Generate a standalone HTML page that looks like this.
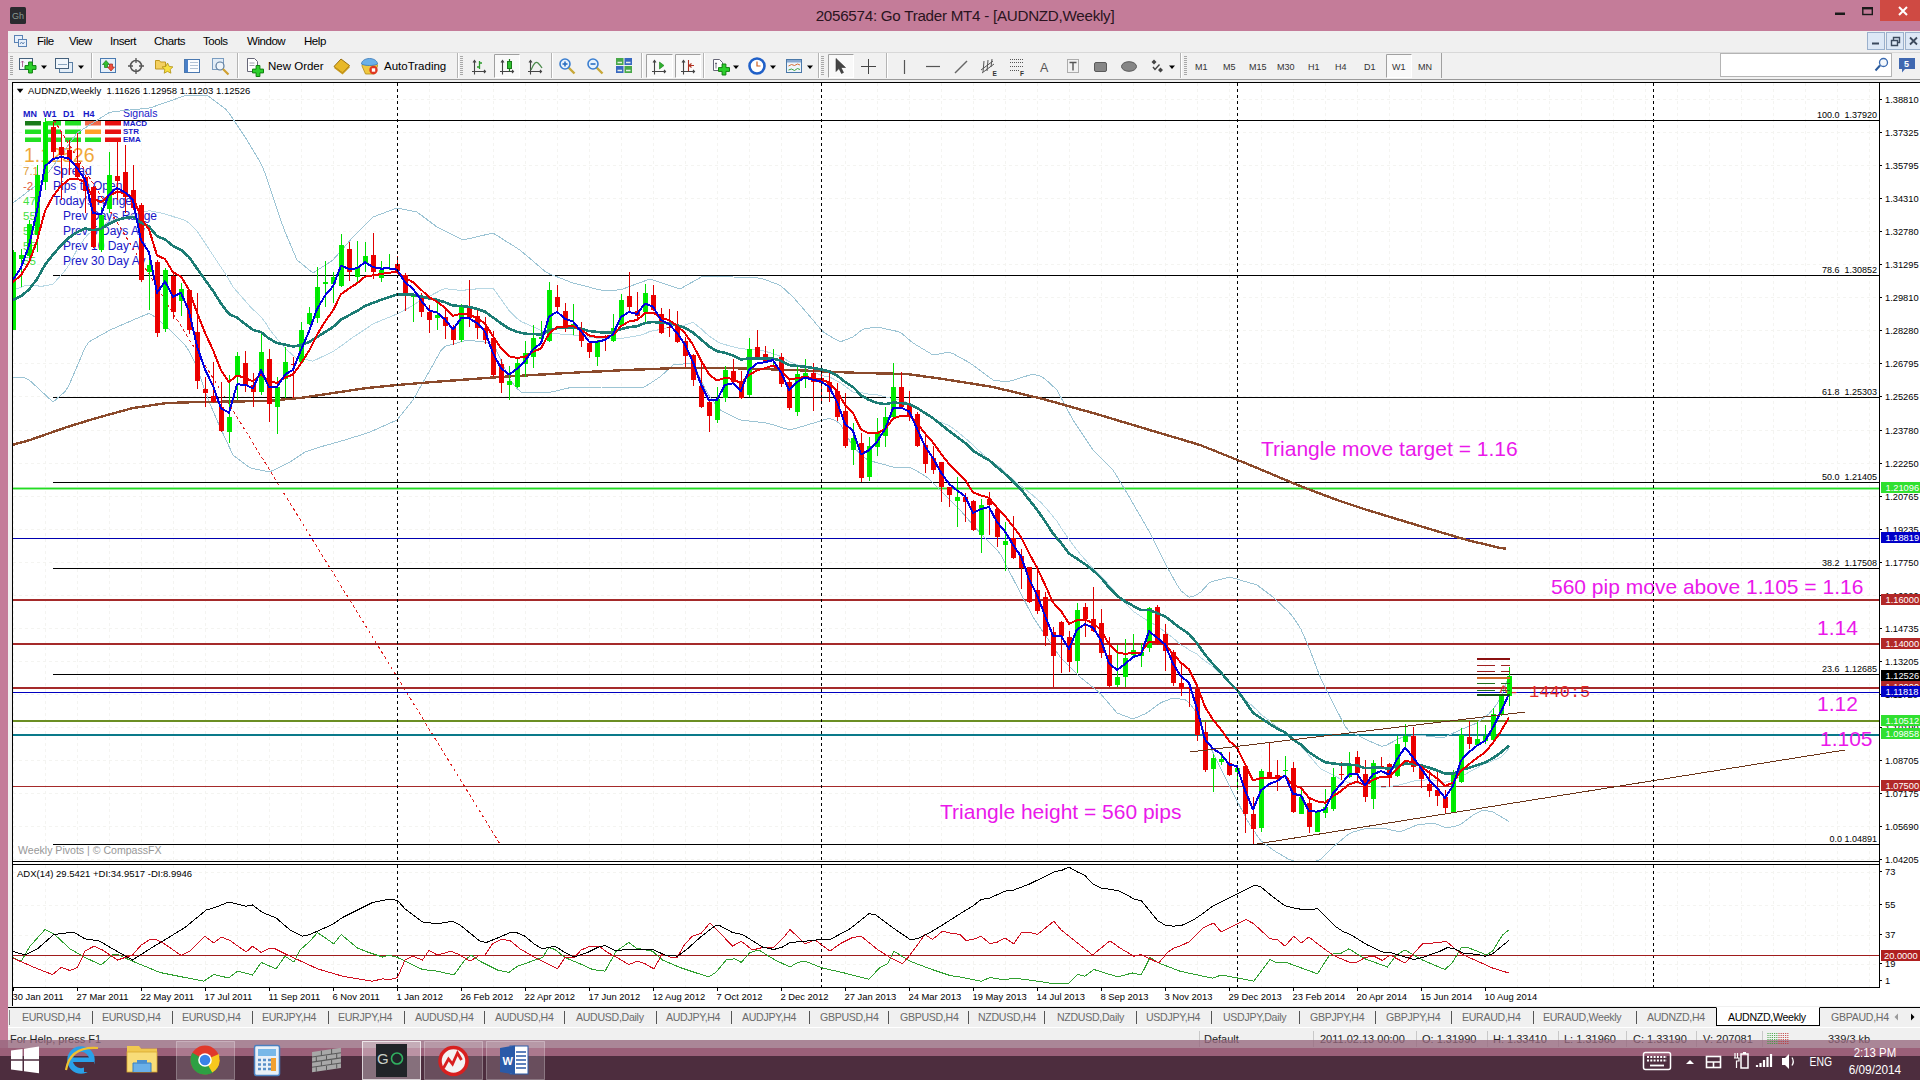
<!DOCTYPE html>
<html><head><meta charset="utf-8"><title>AUDNZD Weekly</title>
<style>
*{box-sizing:border-box;margin:0;padding:0}
html,body{width:1920px;height:1080px;overflow:hidden;background:#c47c99;font-family:"Liberation Sans",sans-serif;}
.abs{position:absolute}
#title{position:absolute;left:0;top:0;width:1920px;height:31px;background:#c47c99}
#title .t{position:absolute;left:0;width:1930px;top:7px;text-align:center;font-size:15.2px;letter-spacing:-0.27px;color:#2a1420}
#menubar{position:absolute;left:8px;top:31px;width:1912px;height:21px;background:#f0f0f0}
#menubar span{position:absolute;top:4px;font-size:11.5px;color:#000;letter-spacing:-0.45px}
#toolbar{position:absolute;left:8px;top:52px;width:1912px;height:28px;background:#f1f1f1;border-top:1px solid #d8d8d8;border-bottom:1px solid #9a9a9a}
#toolbar .tx{position:absolute;top:7px;font-size:11.5px;color:#000}
#toolbar .tf{position:absolute;top:9px;font-size:9px;color:#333}
#client{position:absolute;left:8px;top:80px;width:1912px;height:928px;background:#f0f0f0}
#chart{position:absolute;left:12px;top:82px;width:1908px;height:924px;background:#fff;border-left:1px solid #000;border-top:1px solid #000}
#tabs{position:absolute;left:8px;top:1007px;width:1912px;height:20px;background:#f0f0f0;border-top:1px solid #000}
#tabs span{position:absolute;top:3px;font-size:10.6px;color:#6a6a6a;white-space:nowrap;letter-spacing:-0.3px}
#tabs i{position:absolute;top:3px;width:1px;height:13px;background:#555}
#status{position:absolute;left:8px;top:1027px;width:1912px;height:22px;background:#f0f0f0;border-top:1px solid #fff}
#status span{position:absolute;top:5px;font-size:11px;color:#222;white-space:nowrap}
#status i{position:absolute;top:3px;width:1px;height:16px;background:#c8c8c8}
#tb1{position:absolute;left:0;top:1040px;width:1920px;height:8px;background:rgba(150,104,126,.78)}
#tb2{position:absolute;left:0;top:1048px;width:1920px;height:8px;background:#9b6079}
#tb3{position:absolute;left:0;top:1056px;width:1920px;height:24px;background:#4d2d3e}
svg text{font-family:"Liberation Sans",sans-serif}
</style></head>
<body>
<div id="title"><div class="t">2056574: Go Trader MT4 - [AUDNZD,Weekly]</div></div>
<div id="menubar">
<span style="left:29px">File</span>
<span style="left:61px">View</span>
<span style="left:102px">Insert</span>
<span style="left:146px">Charts</span>
<span style="left:195px">Tools</span>
<span style="left:239px">Window</span>
<span style="left:296px">Help</span>
</div>
<div id="toolbar">
<span class="tx" style="left:260px">New Order</span><span class="tx" style="left:376px">AutoTrading</span>
</div>
<div id="client"></div><div id="chart"></div>
<svg class="abs" style="left:0;top:0" width="1920" height="1080" viewBox="0 0 1920 1080">
<defs><clipPath id="cm"><rect x="13" y="83" width="1866" height="778"/></clipPath><clipPath id="ca"><rect x="13" y="865" width="1866" height="122"/></clipPath></defs>
<path d="M13 99.5H1879M13 132.5H1879M13 165.5H1879M13 198.5H1879M13 231.5H1879M13 264.5H1879M13 297.5H1879M13 330.5H1879M13 363.5H1879M13 396.5H1879M13 430.5H1879M13 463.5H1879M13 496.5H1879M13 529.5H1879M13 562.5H1879M13 595.5H1879M13 628.5H1879M13 661.5H1879M13 694.5H1879M13 727.5H1879M13 760.5H1879M13 793.5H1879M13 826.5H1879M13 859.5H1879M13.5 83V861M13.5 865V987M45.5 83V861M45.5 865V987M77.5 83V861M77.5 865V987M109.5 83V861M109.5 865V987M141.5 83V861M141.5 865V987M173.5 83V861M173.5 865V987M205.5 83V861M205.5 865V987M237.5 83V861M237.5 865V987M269.5 83V861M269.5 865V987M301.5 83V861M301.5 865V987M333.5 83V861M333.5 865V987M365.5 83V861M365.5 865V987M397.5 83V861M397.5 865V987M429.5 83V861M429.5 865V987M461.5 83V861M461.5 865V987M493.5 83V861M493.5 865V987M525.5 83V861M525.5 865V987M557.5 83V861M557.5 865V987M589.5 83V861M589.5 865V987M621.5 83V861M621.5 865V987M653.5 83V861M653.5 865V987M685.5 83V861M685.5 865V987M717.5 83V861M717.5 865V987M749.5 83V861M749.5 865V987M781.5 83V861M781.5 865V987M813.5 83V861M813.5 865V987M845.5 83V861M845.5 865V987M877.5 83V861M877.5 865V987M909.5 83V861M909.5 865V987M941.5 83V861M941.5 865V987M973.5 83V861M973.5 865V987M1005.5 83V861M1005.5 865V987M1037.5 83V861M1037.5 865V987M1069.5 83V861M1069.5 865V987M1101.5 83V861M1101.5 865V987M1133.5 83V861M1133.5 865V987M1165.5 83V861M1165.5 865V987M1197.5 83V861M1197.5 865V987M1229.5 83V861M1229.5 865V987M1261.5 83V861M1261.5 865V987M1293.5 83V861M1293.5 865V987M1325.5 83V861M1325.5 865V987M1357.5 83V861M1357.5 865V987M1389.5 83V861M1389.5 865V987M1421.5 83V861M1421.5 865V987M1453.5 83V861M1453.5 865V987M1485.5 83V861M1485.5 865V987M1517.5 83V861M1517.5 865V987M1549.5 83V861M1549.5 865V987M1581.5 83V861M1581.5 865V987M1613.5 83V861M1613.5 865V987M1645.5 83V861M1645.5 865V987M1677.5 83V861M1677.5 865V987M1709.5 83V861M1709.5 865V987M1741.5 83V861M1741.5 865V987M1773.5 83V861M1773.5 865V987M1805.5 83V861M1805.5 865V987M1837.5 83V861M1837.5 865V987M1869.5 83V861M1869.5 865V987M13 872.5H1879M13 905.5H1879M13 935.5H1879M13 964.5H1879" stroke="#f4f4f1" stroke-width="1" stroke-dasharray="3 3" fill="none"/>
<g clip-path="url(#cm)">
<text x="23" y="117" font-size="9" fill="#1818c8" text-anchor="start" font-weight="bold">MN</text>
<text x="43" y="117" font-size="9" fill="#1818c8" text-anchor="start" font-weight="bold">W1</text>
<text x="63" y="117" font-size="9" fill="#1818c8" text-anchor="start" font-weight="bold">D1</text>
<text x="83" y="117" font-size="9" fill="#1818c8" text-anchor="start" font-weight="bold">H4</text>
<text x="123" y="117" font-size="10.5" fill="#1818c8" text-anchor="start" >Signals</text>
<rect x="25" y="121" width="16" height="4.5" fill="#1a7a1a"/>
<rect x="45" y="121" width="16" height="4.5" fill="#22e022"/>
<rect x="65" y="121" width="16" height="4.5" fill="#22e022"/>
<rect x="85" y="121" width="16" height="4.5" fill="#f06848"/>
<rect x="105" y="121" width="16" height="4.5" fill="#e81010"/>
<rect x="25" y="129.5" width="16" height="4.5" fill="#22e022"/>
<rect x="45" y="129.5" width="16" height="4.5" fill="#22e022"/>
<rect x="65" y="129.5" width="16" height="4.5" fill="#22e022"/>
<rect x="85" y="129.5" width="16" height="4.5" fill="#ffa028"/>
<rect x="105" y="129.5" width="16" height="4.5" fill="#e81010"/>
<rect x="25" y="137.5" width="16" height="4.5" fill="#22e022"/>
<rect x="45" y="137.5" width="16" height="4.5" fill="#22e022"/>
<rect x="65" y="137.5" width="16" height="4.5" fill="#22e022"/>
<rect x="85" y="137.5" width="16" height="4.5" fill="#22e022"/>
<rect x="105" y="137.5" width="16" height="4.5" fill="#e81010"/>
<text x="123" y="126" font-size="8" fill="#1818c8" text-anchor="start" font-weight="bold">MACD</text>
<text x="123" y="134" font-size="8" fill="#1818c8" text-anchor="start" font-weight="bold">STR</text>
<text x="123" y="142" font-size="8" fill="#1818c8" text-anchor="start" font-weight="bold">EMA</text>
<text x="24" y="162" font-size="19.5" fill="#f0a838" text-anchor="start" >1.12526</text>
<text x="23" y="175" font-size="11.5" fill="#e0a040" text-anchor="start" >7.1</text>
<text x="53" y="175" font-size="12" fill="#1818c8" text-anchor="start" >Spread</text>
<text x="23" y="190" font-size="11.5" fill="#e06040" text-anchor="start" >-2</text>
<text x="53" y="190" font-size="12" fill="#1818c8" text-anchor="start" >Pips to Open</text>
<text x="23" y="205" font-size="11.5" fill="#40e040" text-anchor="start" >47</text>
<text x="53" y="205" font-size="12" fill="#1818c8" text-anchor="start" >Today's Range</text>
<text x="23" y="220" font-size="11.5" fill="#40e040" text-anchor="start" >55</text>
<text x="63" y="220" font-size="12" fill="#1818c8" text-anchor="start" >Prev Days Range</text>
<text x="23" y="235" font-size="11.5" fill="#40e040" text-anchor="start" >55</text>
<text x="63" y="235" font-size="12" fill="#1818c8" text-anchor="start" >Prev 5 Days Av</text>
<text x="23" y="250" font-size="11.5" fill="#40e040" text-anchor="start" >55</text>
<text x="63" y="250" font-size="12" fill="#1818c8" text-anchor="start" >Prev 10 Day Av</text>
<text x="23" y="265" font-size="11.5" fill="#40e040" text-anchor="start" >55</text>
<text x="63" y="265" font-size="12" fill="#1818c8" text-anchor="start" >Prev 30 Day Av</text>
<path d="M54 120L500 844" stroke="#e02020" stroke-width="1" stroke-dasharray="3 3" fill="none" shape-rendering="crispEdges"/>
<path d="M53 120.5H1879" stroke="#000" stroke-width="1"/>
<text x="1877" y="118" font-size="9" fill="#000" text-anchor="end" >100.0  1.37920</text>
<path d="M53 275.5H1879" stroke="#000" stroke-width="1"/>
<text x="1877" y="273" font-size="9" fill="#000" text-anchor="end" >78.6  1.30852</text>
<path d="M53 397.5H1879" stroke="#000" stroke-width="1"/>
<text x="1877" y="395" font-size="9" fill="#000" text-anchor="end" >61.8  1.25303</text>
<path d="M53 482.5H1879" stroke="#000" stroke-width="1"/>
<text x="1877" y="480" font-size="9" fill="#000" text-anchor="end" >50.0  1.21405</text>
<path d="M53 568.5H1879" stroke="#000" stroke-width="1"/>
<text x="1877" y="566" font-size="9" fill="#000" text-anchor="end" >38.2  1.17508</text>
<path d="M53 674.5H1879" stroke="#000" stroke-width="1"/>
<text x="1877" y="672" font-size="9" fill="#000" text-anchor="end" >23.6  1.12685</text>
<path d="M53 844.5H1879" stroke="#000" stroke-width="1"/>
<text x="1877" y="842" font-size="9" fill="#000" text-anchor="end" >0.0 1.04891</text>
<path d="M13 488.5H1879" stroke="#22dd22" stroke-width="1"/>
<path d="M13 487.5H1879" stroke="#a0eea0" stroke-width="1"/>
<path d="M13 489.5H1879" stroke="#a0eea0" stroke-width="1"/>
<path d="M13 538.5H1879" stroke="#0000b0" stroke-width="1"/>
<path d="M13 600H1879" stroke="#a52a2a" stroke-width="2"/>
<path d="M13 644H1879" stroke="#a52a2a" stroke-width="2"/>
<path d="M13 688H1879" stroke="#a52a2a" stroke-width="2"/>
<path d="M13 692.5H1879" stroke="#0000c0" stroke-width="1"/>
<path d="M13 721H1879" stroke="#6b8e23" stroke-width="2"/>
<path d="M13 735H1879" stroke="#0a7a8a" stroke-width="2"/>
<path d="M13 786.5H1879" stroke="#a52a2a" stroke-width="1"/>
<polyline points="13.0,203.0 17.0,199.9 21.0,196.9 25.0,193.8 29.0,190.7 33.0,187.7 37.0,184.6 41.0,181.5 45.0,177.2 49.0,171.7 53.0,166.2 57.0,160.6 61.0,155.1 65.0,149.6 69.0,144.1 73.0,138.5 77.0,133.0 81.0,130.5 85.0,127.9 89.0,125.4 93.0,122.8 97.0,120.3 101.0,117.7 105.0,115.2 109.0,112.6 113.0,111.7 117.0,111.3 121.0,110.9 125.0,110.5 129.0,110.1 133.0,109.7 137.0,109.3 141.0,108.9 145.0,108.5 149.0,108.1 153.0,106.9 157.0,105.5 161.0,104.1 165.0,102.7 169.0,101.3 173.0,99.9 177.0,98.5 181.0,97.1 185.0,95.7 189.0,95.0 193.0,95.0 197.0,95.0 201.0,95.0 205.0,95.0 209.0,96.5 213.0,99.5 217.0,102.5 221.0,105.5 225.0,108.5 229.0,113.0 233.0,119.0 237.0,125.0 241.0,131.0 245.0,137.0 249.0,143.4 253.0,150.1 257.0,156.9 261.0,163.6 265.0,173.0 269.0,185.0 273.0,197.0 277.0,209.0 281.0,221.0 285.0,231.7 289.0,241.1 293.0,250.6 297.0,260.0 301.0,263.2 305.0,266.5 309.0,269.8 313.0,273.0 317.0,270.4 321.0,267.8 325.0,265.2 329.0,262.6 333.0,260.0 337.0,255.4 341.0,250.8 345.0,246.2 349.0,241.6 353.0,237.0 357.0,233.0 361.0,229.0 365.0,225.0 369.0,221.0 373.0,217.0 377.0,215.5 381.0,214.0 385.0,212.5 389.0,211.0 393.0,209.5 397.0,208.0 401.0,208.8 405.0,209.6 409.0,210.4 413.0,211.2 417.0,212.0 421.0,215.0 425.0,218.0 429.0,221.0 433.0,224.0 437.0,227.0 441.0,229.0 445.0,231.0 449.0,233.0 453.0,235.0 457.0,237.0 461.0,239.0 465.0,239.5 469.0,238.6 473.0,237.7 477.0,236.7 481.0,235.8 485.0,234.9 489.0,233.9 493.0,233.0 497.0,235.5 501.0,238.0 505.0,240.6 509.0,243.1 513.0,245.6 517.0,248.1 521.0,250.9 525.0,254.3 529.0,257.7 533.0,261.1 537.0,264.5 541.0,267.9 545.0,271.3 549.0,273.8 553.0,275.3 557.0,276.8 561.0,278.4 565.0,279.9 569.0,281.5 573.0,283.0 577.0,284.0 581.0,285.1 585.0,286.1 589.0,287.1 593.0,288.2 597.0,289.2 601.0,290.0 605.0,290.0 609.0,290.0 613.0,290.0 617.0,290.0 621.0,289.6 625.0,288.2 629.0,286.7 633.0,285.2 637.0,283.8 641.0,282.3 645.0,280.8 649.0,279.4 653.0,280.0 657.0,281.3 661.0,282.7 665.0,284.0 669.0,285.3 673.0,286.7 677.0,288.0 681.0,288.4 685.0,286.2 689.0,283.9 693.0,281.7 697.0,279.4 701.0,277.1 705.0,276.1 709.0,276.2 713.0,276.3 717.0,276.5 721.0,276.6 725.0,276.7 729.0,276.9 733.0,277.0 737.0,277.1 741.0,277.3 745.0,277.4 749.0,277.6 753.0,277.7 757.0,277.9 761.0,278.4 765.0,279.8 769.0,281.1 773.0,282.6 777.0,283.9 781.0,285.9 785.0,289.6 789.0,293.3 793.0,297.0 797.0,301.6 801.0,306.1 805.0,310.7 809.0,315.4 813.0,320.1 817.0,324.9 821.0,329.6 825.0,333.2 829.0,335.5 833.0,337.9 837.0,340.2 841.0,341.6 845.0,340.1 849.0,338.5 853.0,337.0 857.0,333.8 861.0,330.6 865.0,328.7 869.0,328.1 873.0,327.6 877.0,327.0 881.0,327.9 885.0,328.7 889.0,329.6 893.0,330.5 897.0,331.3 901.0,332.8 905.0,336.2 909.0,339.6 913.0,343.0 917.0,345.4 921.0,347.8 925.0,350.2 929.0,352.6 933.0,355.0 937.0,354.3 941.0,353.6 945.0,352.9 949.0,352.2 953.0,353.6 957.0,355.9 961.0,358.1 965.0,360.2 969.0,362.4 973.0,365.2 977.0,368.2 981.0,371.1 985.0,374.1 989.0,377.0 993.0,380.0 997.0,380.6 1001.0,381.1 1005.0,381.7 1009.0,381.4 1013.0,380.2 1017.0,378.9 1021.0,377.7 1025.0,376.5 1029.0,375.2 1033.0,374.0 1037.0,375.2 1041.0,376.4 1045.0,378.9 1049.0,382.6 1053.0,386.3 1057.0,390.0 1061.0,397.5 1065.0,405.0 1069.0,412.5 1073.0,420.0 1077.0,426.0 1081.0,432.0 1085.0,438.0 1089.0,444.0 1093.0,450.0 1097.0,454.0 1101.0,458.0 1105.0,462.0 1109.0,466.0 1113.0,470.0 1117.0,476.6 1121.0,483.1 1125.0,489.7 1129.0,496.5 1133.0,503.4 1137.0,510.4 1141.0,517.3 1145.0,524.3 1149.0,531.3 1153.0,539.0 1157.0,547.0 1161.0,555.0 1165.0,563.0 1169.0,570.5 1173.0,577.6 1177.0,584.7 1181.0,590.8 1185.0,594.0 1189.0,597.2 1193.0,596.5 1197.0,594.5 1201.0,591.9 1205.0,587.5 1209.0,583.1 1213.0,581.2 1217.0,580.2 1221.0,579.2 1225.0,578.2 1229.0,577.2 1233.0,577.9 1237.0,579.1 1241.0,580.3 1245.0,581.5 1249.0,582.6 1253.0,583.8 1257.0,585.0 1261.0,588.0 1265.0,591.0 1269.0,594.0 1273.0,597.0 1277.0,600.8 1281.0,604.5 1285.0,608.3 1289.0,612.1 1293.0,617.2 1297.0,622.8 1301.0,629.3 1305.0,638.5 1309.0,647.7 1313.0,658.1 1317.0,668.9 1321.0,679.0 1325.0,687.0 1329.0,695.0 1333.0,703.0 1337.0,710.7 1341.0,718.4 1345.0,726.1 1349.0,731.0 1353.0,733.0 1357.0,735.0 1361.0,737.0 1365.0,739.0 1369.0,740.9 1373.0,742.6 1377.0,744.4 1381.0,746.1 1385.0,745.9 1389.0,743.8 1393.0,741.7 1397.0,739.6 1401.0,737.8 1405.0,737.1 1409.0,736.4 1413.0,735.7 1417.0,735.0 1421.0,735.5 1425.0,735.9 1429.0,736.4 1433.0,736.8 1437.0,737.3 1441.0,737.8 1445.0,737.1 1449.0,735.2 1453.0,733.3 1457.0,731.4 1461.0,729.6 1465.0,727.9 1469.0,726.3 1473.0,724.6 1477.0,723.0 1481.0,719.9 1485.0,716.8 1489.0,713.8 1493.0,709.1 1497.0,703.9 1501.0,697.3 1505.0,686.5 1509.0,675.7" fill="none" stroke="#9cc4d4" stroke-width="1" shape-rendering="crispEdges"/>
<polyline points="13.0,377.0 17.0,377.3 21.0,377.6 25.0,377.9 29.0,379.8 33.0,383.5 37.0,387.2 41.0,390.9 45.0,394.6 49.0,398.3 53.0,402.0 57.0,398.6 61.0,395.1 65.0,391.7 69.0,385.3 73.0,375.9 77.0,366.5 81.0,357.1 85.0,347.7 89.0,341.9 93.0,339.6 97.0,337.3 101.0,335.1 105.0,332.8 109.0,330.6 113.0,328.7 117.0,327.0 121.0,325.2 125.0,323.5 129.0,321.8 133.0,320.0 137.0,318.3 141.0,316.6 145.0,315.0 149.0,313.4 153.0,315.5 157.0,318.8 161.0,322.1 165.0,325.4 169.0,329.0 173.0,333.0 177.0,337.0 181.0,341.0 185.0,345.0 189.0,351.0 193.0,359.0 197.0,367.0 201.0,379.0 205.0,391.0 209.0,401.6 213.0,410.8 217.0,420.1 221.0,429.2 225.0,437.8 229.0,446.4 233.0,455.0 237.0,458.1 241.0,461.1 245.0,464.2 249.0,467.2 253.0,468.6 257.0,469.4 261.0,470.2 265.0,471.0 269.0,471.8 273.0,470.5 277.0,468.5 281.0,466.5 285.0,464.5 289.0,462.5 293.0,460.0 297.0,457.3 301.0,454.7 305.0,452.0 309.0,450.7 313.0,449.3 317.0,448.0 321.0,446.7 325.0,445.6 329.0,444.5 333.0,443.4 337.0,442.2 341.0,441.1 345.0,440.0 349.0,438.7 353.0,437.4 357.0,436.2 361.0,434.9 365.0,433.6 369.0,432.3 373.0,430.7 377.0,428.9 381.0,427.1 385.0,425.3 389.0,423.6 393.0,421.8 397.0,420.0 401.0,415.0 405.0,410.0 409.0,405.0 413.0,400.0 417.0,392.9 421.0,385.9 425.0,378.8 429.0,371.8 433.0,364.7 437.0,357.6 441.0,350.5 445.0,346.4 449.0,345.2 453.0,344.1 457.0,342.9 461.0,341.8 465.0,340.6 469.0,340.2 473.0,340.7 477.0,341.2 481.0,341.6 485.0,342.1 489.0,342.5 493.0,343.0 497.0,351.7 501.0,360.4 505.0,369.1 509.0,377.8 513.0,383.6 517.0,388.4 521.0,392.0 525.0,392.2 529.0,392.3 533.0,392.5 537.0,392.6 541.0,392.8 545.0,392.9 549.0,392.5 553.0,391.6 557.0,390.7 561.0,389.8 565.0,388.8 569.0,387.9 573.0,387.0 577.0,387.0 581.0,387.0 585.0,387.0 589.0,387.0 593.0,387.0 597.0,387.0 601.0,387.0 605.0,387.1 609.0,387.2 613.0,387.3 617.0,387.4 621.0,387.5 625.0,387.6 629.0,387.7 633.0,387.8 637.0,387.9 641.0,388.0 645.0,386.7 649.0,384.1 653.0,381.5 657.0,378.9 661.0,376.1 665.0,372.4 669.0,368.7 673.0,365.0 677.0,364.6 681.0,364.2 685.0,363.8 689.0,363.4 693.0,363.0 697.0,371.6 701.0,380.1 705.0,388.7 709.0,395.6 713.0,400.8 717.0,406.1 721.0,410.5 725.0,412.5 729.0,414.5 733.0,416.5 737.0,418.5 741.0,420.1 745.0,420.6 749.0,421.0 753.0,421.4 757.0,421.9 761.0,422.3 765.0,422.8 769.0,423.6 773.0,424.8 777.0,426.0 781.0,427.3 785.0,428.5 789.0,429.7 793.0,429.1 797.0,427.9 801.0,426.8 805.0,425.6 809.0,424.4 813.0,423.2 817.0,422.0 821.0,420.7 825.0,419.5 829.0,418.3 833.0,419.5 837.0,421.5 841.0,424.8 845.0,432.2 849.0,439.6 853.0,447.0 857.0,450.7 861.0,454.4 865.0,458.1 869.0,460.5 873.0,461.6 877.0,462.7 881.0,463.8 885.0,464.8 889.0,465.9 893.0,467.0 897.0,467.0 901.0,467.0 905.0,467.0 909.0,467.0 913.0,468.8 917.0,471.1 921.0,473.5 925.0,475.8 929.0,479.0 933.0,483.0 937.0,487.0 941.0,491.0 945.0,495.0 949.0,499.0 953.0,503.0 957.0,507.0 961.0,511.1 965.0,515.8 969.0,520.4 973.0,525.0 977.0,529.5 981.0,534.0 985.0,538.0 989.0,542.0 993.0,546.0 997.0,550.0 1001.0,555.0 1005.0,563.0 1009.0,570.8 1013.0,578.5 1017.0,586.2 1021.0,593.9 1025.0,601.6 1029.0,609.3 1033.0,617.0 1037.0,622.9 1041.0,628.9 1045.0,634.8 1049.0,640.7 1053.0,646.6 1057.0,652.6 1061.0,658.0 1065.0,662.0 1069.0,666.0 1073.0,670.0 1077.0,674.0 1081.0,677.8 1085.0,681.0 1089.0,684.2 1093.0,687.4 1097.0,690.6 1101.0,694.2 1105.0,698.9 1109.0,703.6 1113.0,708.3 1117.0,713.0 1121.0,714.5 1125.0,716.0 1129.0,717.5 1133.0,719.0 1137.0,717.3 1141.0,715.6 1145.0,713.9 1149.0,711.5 1153.0,708.4 1157.0,705.3 1161.0,702.6 1165.0,701.1 1169.0,699.5 1173.0,698.0 1177.0,698.6 1181.0,699.1 1185.0,699.7 1189.0,702.6 1193.0,707.8 1197.0,713.0 1201.0,723.8 1205.0,734.6 1209.0,744.2 1213.0,752.5 1217.0,760.8 1221.0,769.0 1225.0,777.0 1229.0,785.0 1233.0,793.0 1237.0,800.7 1241.0,808.4 1245.0,816.1 1249.0,823.1 1253.0,829.2 1257.0,835.4 1261.0,840.8 1265.0,843.8 1269.0,846.9 1273.0,850.0 1277.0,852.4 1281.0,854.7 1285.0,857.1 1289.0,859.4 1293.0,860.8 1297.0,861.9 1301.0,862.9 1305.0,864.0 1309.0,862.9 1313.0,861.9 1317.0,860.8 1321.0,859.0 1325.0,855.0 1329.0,851.0 1333.0,847.0 1337.0,843.7 1341.0,840.4 1345.0,837.1 1349.0,833.8 1353.0,832.1 1357.0,830.9 1361.0,829.8 1365.0,828.6 1369.0,828.0 1373.0,828.0 1377.0,828.0 1381.0,828.0 1385.0,828.5 1389.0,829.4 1393.0,830.4 1397.0,831.3 1401.0,831.6 1405.0,829.9 1409.0,828.3 1413.0,826.6 1417.0,825.0 1421.0,824.5 1425.0,824.0 1429.0,823.5 1433.0,823.0 1437.0,824.4 1441.0,825.9 1445.0,827.3 1449.0,827.5 1453.0,826.6 1457.0,825.7 1461.0,824.2 1465.0,821.2 1469.0,818.1 1473.0,815.0 1477.0,813.0 1481.0,811.0 1485.0,810.4 1489.0,811.2 1493.0,812.0 1497.0,814.4 1501.0,816.7 1505.0,819.1 1509.0,821.4" fill="none" stroke="#9cc4d4" stroke-width="1" shape-rendering="crispEdges"/>
<polyline points="13.0,290.0 17.0,288.6 21.0,287.2 25.0,285.8 29.0,285.3 33.0,285.6 37.0,285.9 41.0,286.2 45.0,285.9 49.0,285.0 53.0,284.1 57.0,279.6 61.0,275.1 65.0,270.7 69.0,264.7 73.0,257.2 77.0,249.8 81.0,243.8 85.0,237.8 89.0,233.6 93.0,231.2 97.0,228.8 101.0,226.4 105.0,224.0 109.0,221.6 113.0,220.2 117.0,219.1 121.0,218.1 125.0,217.0 129.0,215.9 133.0,214.9 137.0,213.8 141.0,212.8 145.0,211.8 149.0,210.8 153.0,211.2 157.0,212.2 161.0,213.1 165.0,214.0 169.0,215.2 173.0,216.5 177.0,217.8 181.0,219.1 185.0,220.4 189.0,223.0 193.0,227.0 197.0,231.0 201.0,237.0 205.0,243.0 209.0,249.1 213.0,255.2 217.0,261.3 221.0,267.3 225.0,273.1 229.0,279.7 233.0,287.0 237.0,291.5 241.0,296.1 245.0,300.6 249.0,305.3 253.0,309.4 257.0,313.1 261.0,316.9 265.0,322.0 269.0,328.4 273.0,333.8 277.0,338.8 281.0,343.8 285.0,348.1 289.0,351.8 293.0,355.3 297.0,358.7 301.0,359.0 305.0,359.2 309.0,360.2 313.0,361.2 317.0,359.2 321.0,357.3 325.0,355.4 329.0,353.5 333.0,351.7 337.0,348.8 341.0,346.0 345.0,343.1 349.0,340.2 353.0,337.2 357.0,334.6 361.0,331.9 365.0,329.3 369.0,326.7 373.0,323.8 377.0,322.2 381.0,320.6 385.0,318.9 389.0,317.3 393.0,315.6 397.0,314.0 401.0,311.9 405.0,309.8 409.0,307.7 413.0,305.6 417.0,302.5 421.0,300.4 425.0,298.4 429.0,296.4 433.0,294.3 437.0,292.3 441.0,289.8 445.0,288.7 449.0,289.1 453.0,289.5 457.0,290.0 461.0,290.4 465.0,290.1 469.0,289.4 473.0,289.2 477.0,288.9 481.0,288.7 485.0,288.5 489.0,288.2 493.0,288.0 497.0,293.6 501.0,299.2 505.0,304.8 509.0,310.4 513.0,314.6 517.0,318.3 521.0,321.4 525.0,323.2 529.0,325.0 533.0,326.8 537.0,328.6 541.0,330.3 545.0,332.1 549.0,333.2 553.0,333.5 557.0,333.8 561.0,334.1 565.0,334.4 569.0,334.7 573.0,335.0 577.0,335.5 581.0,336.0 585.0,336.6 589.0,337.1 593.0,337.6 597.0,338.1 601.0,338.5 605.0,338.6 609.0,338.6 613.0,338.7 617.0,338.7 621.0,338.6 625.0,337.9 629.0,337.2 633.0,336.5 637.0,335.8 641.0,335.1 645.0,333.8 649.0,331.7 653.0,330.8 657.0,330.1 661.0,329.4 665.0,328.2 669.0,327.0 673.0,325.8 677.0,326.3 681.0,326.3 685.0,325.0 689.0,323.7 693.0,322.3 697.0,325.5 701.0,328.6 705.0,332.4 709.0,335.9 713.0,338.6 717.0,341.3 721.0,343.6 725.0,344.6 729.0,345.7 733.0,346.8 737.0,347.8 741.0,348.7 745.0,349.0 749.0,349.3 753.0,349.6 757.0,349.9 761.0,350.3 765.0,351.3 769.0,352.4 773.0,353.7 777.0,355.0 781.0,356.6 785.0,359.0 789.0,361.5 793.0,363.1 797.0,364.8 801.0,366.5 805.0,368.2 809.0,369.9 813.0,371.6 817.0,373.4 821.0,375.2 825.0,376.3 829.0,376.9 833.0,378.7 837.0,380.9 841.0,383.2 845.0,386.2 849.0,389.1 853.0,392.0 857.0,392.3 861.0,392.5 865.0,393.4 869.0,394.3 873.0,394.6 877.0,394.8 881.0,395.8 885.0,396.8 889.0,397.8 893.0,398.7 897.0,399.2 901.0,399.9 905.0,401.6 909.0,403.3 913.0,405.9 917.0,408.3 921.0,410.6 925.0,413.0 929.0,415.8 933.0,419.0 937.0,420.6 941.0,422.3 945.0,423.9 949.0,425.6 953.0,428.3 957.0,431.4 961.0,434.6 965.0,438.0 969.0,441.4 973.0,445.1 977.0,448.9 981.0,452.6 985.0,456.0 989.0,459.5 993.0,463.0 997.0,465.3 1001.0,468.1 1005.0,472.4 1009.0,476.1 1013.0,479.3 1017.0,482.6 1021.0,485.8 1025.0,489.0 1029.0,492.3 1033.0,495.5 1037.0,499.1 1041.0,502.6 1045.0,506.8 1049.0,511.6 1053.0,516.5 1057.0,521.3 1061.0,527.8 1065.0,533.5 1069.0,539.2 1073.0,545.0 1077.0,550.0 1081.0,554.9 1085.0,559.5 1089.0,564.1 1093.0,568.7 1097.0,572.3 1101.0,576.1 1105.0,580.4 1109.0,584.8 1113.0,589.1 1117.0,594.8 1121.0,598.8 1125.0,602.9 1129.0,607.0 1133.0,611.2 1137.0,613.8 1141.0,616.5 1145.0,619.1 1149.0,621.4 1153.0,623.7 1157.0,626.2 1161.0,628.8 1165.0,632.0 1169.0,635.0 1173.0,637.8 1177.0,641.6 1181.0,645.0 1185.0,646.9 1189.0,649.9 1193.0,652.1 1197.0,653.8 1201.0,657.8 1205.0,661.0 1209.0,663.6 1213.0,666.9 1217.0,670.5 1221.0,674.1 1225.0,677.6 1229.0,681.1 1233.0,685.5 1237.0,689.9 1241.0,694.4 1245.0,698.8 1249.0,702.9 1253.0,706.5 1257.0,710.2 1261.0,714.4 1265.0,717.4 1269.0,720.5 1273.0,723.5 1277.0,726.6 1281.0,729.6 1285.0,732.7 1289.0,735.7 1293.0,739.0 1297.0,742.3 1301.0,746.1 1305.0,751.2 1309.0,755.3 1313.0,760.0 1317.0,764.8 1321.0,769.0 1325.0,771.0 1329.0,773.0 1333.0,775.0 1337.0,777.2 1341.0,779.4 1345.0,781.6 1349.0,782.4 1353.0,782.6 1357.0,783.0 1361.0,783.4 1365.0,783.8 1369.0,784.4 1373.0,785.3 1377.0,786.2 1381.0,787.1 1385.0,787.2 1389.0,786.6 1393.0,786.0 1397.0,785.4 1401.0,784.7 1405.0,783.5 1409.0,782.4 1413.0,781.2 1417.0,780.0 1421.0,780.0 1425.0,780.0 1429.0,779.9 1433.0,779.9 1437.0,780.9 1441.0,781.8 1445.0,782.2 1449.0,781.4 1453.0,780.0 1457.0,778.6 1461.0,776.9 1465.0,774.5 1469.0,772.2 1473.0,769.8 1477.0,768.0 1481.0,765.5 1485.0,763.6 1489.0,762.5 1493.0,760.5 1497.0,759.1 1501.0,757.0 1505.0,752.8 1509.0,748.6" fill="none" stroke="#b8d8e4" stroke-width="1" shape-rendering="crispEdges"/>
<polyline points="12.0,445.0 18.0,443.3 24.0,441.7 30.0,440.0 36.0,437.9 42.0,435.8 48.0,433.7 54.0,431.6 60.0,429.5 66.0,427.4 72.0,425.5 78.0,423.7 84.0,421.8 90.0,420.0 96.0,418.2 102.0,416.5 108.0,414.8 114.0,413.2 120.0,411.5 126.0,409.9 132.0,408.3 138.0,407.3 144.0,406.4 150.0,405.5 156.0,404.6 162.0,403.7 168.0,403.0 174.0,402.8 180.0,402.6 186.0,402.4 192.0,402.2 198.0,402.1 204.0,401.9 210.0,401.9 216.0,401.8 222.0,401.7 228.0,401.6 234.0,401.5 240.0,401.4 246.0,401.3 252.0,401.2 258.0,401.1 264.0,401.0 270.0,400.7 276.0,400.2 282.0,399.6 288.0,399.1 294.0,398.5 300.0,398.0 306.0,397.1 312.0,396.2 318.0,395.3 324.0,394.4 330.0,393.5 336.0,392.6 342.0,391.7 348.0,390.8 354.0,389.9 360.0,389.0 366.0,388.1 372.0,387.5 378.0,386.9 384.0,386.3 390.0,385.7 396.0,385.1 402.0,384.6 408.0,384.1 414.0,383.6 420.0,383.1 426.0,382.6 432.0,382.1 438.0,381.6 444.0,381.2 450.0,380.7 456.0,380.3 462.0,379.8 468.0,379.4 474.0,378.9 480.0,378.5 486.0,378.0 492.0,377.6 498.0,377.1 504.0,376.8 510.0,376.4 516.0,376.0 522.0,375.7 528.0,375.3 534.0,375.0 540.0,374.6 546.0,374.3 552.0,373.9 558.0,373.5 564.0,373.2 570.0,372.9 576.0,372.6 582.0,372.2 588.0,371.9 594.0,371.6 600.0,371.4 606.0,371.1 612.0,370.8 618.0,370.4 624.0,370.1 630.0,369.9 636.0,369.6 642.0,369.4 648.0,369.2 654.0,368.9 660.0,368.7 666.0,368.4 672.0,368.2 678.0,368.0 684.0,368.0 690.0,368.0 696.0,368.0 702.0,368.0 708.0,368.0 714.0,368.0 720.0,368.0 726.0,368.0 732.0,368.2 738.0,368.3 744.0,368.5 750.0,368.7 756.0,368.9 762.0,369.1 768.0,369.2 774.0,369.4 780.0,369.6 786.0,369.8 792.0,370.0 798.0,370.2 804.0,370.5 810.0,370.8 816.0,371.0 822.0,371.3 828.0,371.6 834.0,371.8 840.0,372.1 846.0,372.4 852.0,372.6 858.0,372.9 864.0,373.1 870.0,373.2 876.0,373.3 882.0,373.5 888.0,373.6 894.0,373.7 900.0,373.9 906.0,374.0 912.0,374.7 918.0,375.5 924.0,376.4 930.0,377.2 936.0,378.0 942.0,378.9 948.0,379.8 954.0,380.8 960.0,381.7 966.0,382.7 972.0,383.6 978.0,384.6 984.0,385.6 990.0,386.5 996.0,387.7 1002.0,389.2 1008.0,390.6 1014.0,392.0 1020.0,393.5 1026.0,394.9 1032.0,396.4 1038.0,397.8 1044.0,399.3 1050.0,401.0 1056.0,402.6 1062.0,404.3 1068.0,406.0 1074.0,407.7 1080.0,409.4 1086.0,411.0 1092.0,412.7 1098.0,414.5 1104.0,416.3 1110.0,418.1 1116.0,419.9 1122.0,421.7 1128.0,423.5 1134.0,425.3 1140.0,427.1 1146.0,428.9 1152.0,430.7 1158.0,432.5 1164.0,434.3 1170.0,436.1 1176.0,437.8 1182.0,439.6 1188.0,441.4 1194.0,443.2 1200.0,445.0 1206.0,447.4 1212.0,449.8 1218.0,452.2 1224.0,454.6 1230.0,457.0 1236.0,459.4 1242.0,461.8 1248.0,464.2 1254.0,466.7 1260.0,469.2 1266.0,471.7 1272.0,474.2 1278.0,476.8 1284.0,479.3 1290.0,481.8 1296.0,484.3 1302.0,486.8 1308.0,489.0 1314.0,491.3 1320.0,493.6 1326.0,495.8 1332.0,498.1 1338.0,500.3 1344.0,502.3 1350.0,504.3 1356.0,506.3 1362.0,508.3 1368.0,510.3 1374.0,512.1 1380.0,513.9 1386.0,515.8 1392.0,517.6 1398.0,519.4 1404.0,521.2 1410.0,523.0 1416.0,524.8 1422.0,526.7 1428.0,528.5 1434.0,530.3 1440.0,532.1 1446.0,533.8 1452.0,535.6 1458.0,537.4 1464.0,539.1 1470.0,540.7 1476.0,542.2 1482.0,543.6 1488.0,545.1 1494.0,546.5 1500.0,548.0 1506.0,548.6" fill="none" stroke="#8b4a2b" stroke-width="2.4" stroke-linejoin="round" shape-rendering="crispEdges"/>
<rect x="11" y="252" width="5" height="78" fill="#00ee00"/>
<rect x="19" y="255" width="5" height="4" fill="#00ee00"/>
<rect x="27" y="224" width="5" height="32" fill="#00ee00"/>
<rect x="35" y="175" width="5" height="60" fill="#00ee00"/>
<rect x="43" y="122" width="5" height="60" fill="#00ee00"/>
<rect x="51" y="127" width="5" height="25" fill="#ee0000"/>
<rect x="59" y="147" width="5" height="8" fill="#ee0000"/>
<rect x="67" y="150" width="5" height="10" fill="#ee0000"/>
<rect x="75" y="163" width="5" height="14" fill="#ee0000"/>
<rect x="83" y="177" width="5" height="14" fill="#ee0000"/>
<rect x="91" y="187" width="5" height="60" fill="#ee0000"/>
<rect x="99" y="215" width="5" height="35" fill="#00ee00"/>
<rect x="107" y="175" width="5" height="34" fill="#00ee00"/>
<rect x="115" y="176" width="5" height="5" fill="#ee0000"/>
<rect x="123" y="172" width="5" height="25" fill="#ee0000"/>
<rect x="131" y="190" width="5" height="18" fill="#ee0000"/>
<rect x="139" y="205" width="5" height="75" fill="#ee0000"/>
<rect x="147" y="265" width="5" height="7" fill="#00ee00"/>
<rect x="155" y="262" width="5" height="71" fill="#ee0000"/>
<rect x="163" y="270" width="5" height="59" fill="#00ee00"/>
<rect x="171" y="276" width="5" height="36" fill="#ee0000"/>
<rect x="179" y="289" width="5" height="12" fill="#00ee00"/>
<rect x="187" y="290" width="5" height="40" fill="#ee0000"/>
<rect x="195" y="332" width="5" height="49" fill="#ee0000"/>
<rect x="203" y="389" width="5" height="4" fill="#ee0000"/>
<rect x="211" y="396" width="5" height="6" fill="#ee0000"/>
<rect x="219" y="407" width="5" height="24" fill="#ee0000"/>
<rect x="227" y="417" width="5" height="15" fill="#00ee00"/>
<rect x="235" y="356" width="5" height="21" fill="#00ee00"/>
<rect x="243" y="363" width="5" height="22" fill="#ee0000"/>
<rect x="251" y="385" width="5" height="7" fill="#ee0000"/>
<rect x="259" y="352" width="5" height="40" fill="#00ee00"/>
<rect x="267" y="359" width="5" height="45" fill="#ee0000"/>
<rect x="275" y="387" width="5" height="20" fill="#00ee00"/>
<rect x="283" y="362" width="5" height="17" fill="#00ee00"/>
<rect x="291" y="364" width="5" height="1" fill="#ee0000"/>
<rect x="299" y="330" width="5" height="32" fill="#00ee00"/>
<rect x="307" y="313" width="5" height="11" fill="#00ee00"/>
<rect x="315" y="287" width="5" height="31" fill="#00ee00"/>
<rect x="323" y="282" width="5" height="2" fill="#00ee00"/>
<rect x="331" y="277" width="5" height="7" fill="#00ee00"/>
<rect x="339" y="245" width="5" height="41" fill="#00ee00"/>
<rect x="347" y="249" width="5" height="23" fill="#ee0000"/>
<rect x="355" y="268" width="5" height="9" fill="#00ee00"/>
<rect x="363" y="256" width="5" height="7" fill="#00ee00"/>
<rect x="371" y="255" width="5" height="17" fill="#ee0000"/>
<rect x="379" y="270" width="5" height="8" fill="#00ee00"/>
<rect x="387" y="268" width="5" height="1" fill="#00ee00"/>
<rect x="395" y="264" width="5" height="7" fill="#ee0000"/>
<rect x="403" y="275" width="5" height="20" fill="#ee0000"/>
<rect x="411" y="295" width="5" height="2" fill="#00ee00"/>
<rect x="419" y="296" width="5" height="16" fill="#ee0000"/>
<rect x="427" y="312" width="5" height="8" fill="#ee0000"/>
<rect x="435" y="315" width="5" height="3" fill="#00ee00"/>
<rect x="443" y="317" width="5" height="9" fill="#ee0000"/>
<rect x="451" y="327" width="5" height="13" fill="#ee0000"/>
<rect x="459" y="307" width="5" height="33" fill="#00ee00"/>
<rect x="467" y="308" width="5" height="10" fill="#ee0000"/>
<rect x="475" y="316" width="5" height="12" fill="#ee0000"/>
<rect x="483" y="328" width="5" height="12" fill="#ee0000"/>
<rect x="491" y="338" width="5" height="37" fill="#ee0000"/>
<rect x="499" y="364" width="5" height="19" fill="#ee0000"/>
<rect x="507" y="381" width="5" height="4" fill="#00ee00"/>
<rect x="515" y="363" width="5" height="24" fill="#00ee00"/>
<rect x="523" y="353" width="5" height="11" fill="#00ee00"/>
<rect x="531" y="338" width="5" height="19" fill="#00ee00"/>
<rect x="539" y="337" width="5" height="2" fill="#00ee00"/>
<rect x="547" y="290" width="5" height="51" fill="#00ee00"/>
<rect x="555" y="297" width="5" height="10" fill="#ee0000"/>
<rect x="563" y="311" width="5" height="15" fill="#ee0000"/>
<rect x="571" y="324" width="5" height="3" fill="#00ee00"/>
<rect x="579" y="330" width="5" height="11" fill="#ee0000"/>
<rect x="587" y="343" width="5" height="9" fill="#ee0000"/>
<rect x="595" y="342" width="5" height="15" fill="#00ee00"/>
<rect x="603" y="336" width="5" height="2" fill="#ee0000"/>
<rect x="611" y="328" width="5" height="13" fill="#00ee00"/>
<rect x="619" y="300" width="5" height="25" fill="#00ee00"/>
<rect x="627" y="296" width="5" height="11" fill="#ee0000"/>
<rect x="635" y="311" width="5" height="5" fill="#ee0000"/>
<rect x="643" y="293" width="5" height="19" fill="#00ee00"/>
<rect x="651" y="295" width="5" height="15" fill="#ee0000"/>
<rect x="659" y="314" width="5" height="19" fill="#ee0000"/>
<rect x="667" y="327" width="5" height="1" fill="#ee0000"/>
<rect x="675" y="326" width="5" height="16" fill="#ee0000"/>
<rect x="683" y="341" width="5" height="15" fill="#ee0000"/>
<rect x="691" y="355" width="5" height="25" fill="#ee0000"/>
<rect x="699" y="386" width="5" height="21" fill="#ee0000"/>
<rect x="707" y="402" width="5" height="14" fill="#ee0000"/>
<rect x="715" y="399" width="5" height="21" fill="#00ee00"/>
<rect x="723" y="370" width="5" height="28" fill="#00ee00"/>
<rect x="731" y="371" width="5" height="11" fill="#ee0000"/>
<rect x="739" y="381" width="5" height="17" fill="#ee0000"/>
<rect x="747" y="349" width="5" height="46" fill="#00ee00"/>
<rect x="755" y="347" width="5" height="10" fill="#ee0000"/>
<rect x="763" y="354" width="5" height="7" fill="#ee0000"/>
<rect x="771" y="358" width="5" height="1" fill="#00ee00"/>
<rect x="779" y="357" width="5" height="27" fill="#ee0000"/>
<rect x="787" y="382" width="5" height="26" fill="#ee0000"/>
<rect x="795" y="374" width="5" height="38" fill="#00ee00"/>
<rect x="803" y="373" width="5" height="4" fill="#00ee00"/>
<rect x="811" y="373" width="5" height="9" fill="#ee0000"/>
<rect x="819" y="378" width="5" height="5" fill="#ee0000"/>
<rect x="827" y="382" width="5" height="10" fill="#ee0000"/>
<rect x="835" y="391" width="5" height="26" fill="#ee0000"/>
<rect x="843" y="411" width="5" height="35" fill="#ee0000"/>
<rect x="851" y="438" width="5" height="12" fill="#00ee00"/>
<rect x="859" y="443" width="5" height="35" fill="#ee0000"/>
<rect x="867" y="446" width="5" height="31" fill="#00ee00"/>
<rect x="875" y="433" width="5" height="14" fill="#00ee00"/>
<rect x="883" y="417" width="5" height="19" fill="#00ee00"/>
<rect x="891" y="387" width="5" height="30" fill="#00ee00"/>
<rect x="899" y="387" width="5" height="20" fill="#ee0000"/>
<rect x="907" y="404" width="5" height="11" fill="#ee0000"/>
<rect x="915" y="414" width="5" height="32" fill="#ee0000"/>
<rect x="923" y="445" width="5" height="19" fill="#ee0000"/>
<rect x="931" y="458" width="5" height="12" fill="#ee0000"/>
<rect x="939" y="462" width="5" height="25" fill="#ee0000"/>
<rect x="947" y="487" width="5" height="8" fill="#ee0000"/>
<rect x="955" y="497" width="5" height="4" fill="#00ee00"/>
<rect x="963" y="497" width="5" height="5" fill="#ee0000"/>
<rect x="971" y="501" width="5" height="29" fill="#ee0000"/>
<rect x="979" y="505" width="5" height="30" fill="#00ee00"/>
<rect x="987" y="499" width="5" height="6" fill="#ee0000"/>
<rect x="995" y="509" width="5" height="28" fill="#ee0000"/>
<rect x="1003" y="541" width="5" height="4" fill="#00ee00"/>
<rect x="1011" y="538" width="5" height="20" fill="#ee0000"/>
<rect x="1019" y="556" width="5" height="12" fill="#ee0000"/>
<rect x="1027" y="567" width="5" height="35" fill="#ee0000"/>
<rect x="1035" y="590" width="5" height="21" fill="#ee0000"/>
<rect x="1043" y="597" width="5" height="39" fill="#ee0000"/>
<rect x="1051" y="632" width="5" height="24" fill="#ee0000"/>
<rect x="1059" y="622" width="5" height="14" fill="#ee0000"/>
<rect x="1067" y="637" width="5" height="25" fill="#ee0000"/>
<rect x="1075" y="610" width="5" height="51" fill="#00ee00"/>
<rect x="1083" y="607" width="5" height="12" fill="#ee0000"/>
<rect x="1091" y="619" width="5" height="12" fill="#ee0000"/>
<rect x="1099" y="623" width="5" height="30" fill="#ee0000"/>
<rect x="1107" y="655" width="5" height="31" fill="#ee0000"/>
<rect x="1115" y="677" width="5" height="8" fill="#00ee00"/>
<rect x="1123" y="658" width="5" height="19" fill="#00ee00"/>
<rect x="1131" y="650" width="5" height="5" fill="#00ee00"/>
<rect x="1139" y="652" width="5" height="4" fill="#00ee00"/>
<rect x="1147" y="608" width="5" height="40" fill="#00ee00"/>
<rect x="1155" y="607" width="5" height="37" fill="#ee0000"/>
<rect x="1163" y="634" width="5" height="17" fill="#ee0000"/>
<rect x="1171" y="652" width="5" height="31" fill="#ee0000"/>
<rect x="1179" y="683" width="5" height="6" fill="#ee0000"/>
<rect x="1187" y="687" width="5" height="2" fill="#ee0000"/>
<rect x="1195" y="689" width="5" height="46" fill="#ee0000"/>
<rect x="1203" y="732" width="5" height="38" fill="#ee0000"/>
<rect x="1211" y="758" width="5" height="11" fill="#00ee00"/>
<rect x="1219" y="759" width="5" height="3" fill="#00ee00"/>
<rect x="1227" y="763" width="5" height="12" fill="#ee0000"/>
<rect x="1235" y="768" width="5" height="4" fill="#00ee00"/>
<rect x="1243" y="766" width="5" height="48" fill="#ee0000"/>
<rect x="1251" y="814" width="5" height="15" fill="#ee0000"/>
<rect x="1259" y="771" width="5" height="57" fill="#00ee00"/>
<rect x="1267" y="772" width="5" height="6" fill="#ee0000"/>
<rect x="1275" y="775" width="5" height="3" fill="#ee0000"/>
<rect x="1283" y="770" width="5" height="1" fill="#00ee00"/>
<rect x="1291" y="768" width="5" height="44" fill="#ee0000"/>
<rect x="1299" y="797" width="5" height="17" fill="#00ee00"/>
<rect x="1307" y="803" width="5" height="24" fill="#ee0000"/>
<rect x="1315" y="812" width="5" height="20" fill="#00ee00"/>
<rect x="1323" y="807" width="5" height="6" fill="#00ee00"/>
<rect x="1331" y="777" width="5" height="32" fill="#00ee00"/>
<rect x="1339" y="774" width="5" height="1" fill="#ee0000"/>
<rect x="1347" y="765" width="5" height="12" fill="#00ee00"/>
<rect x="1355" y="757" width="5" height="16" fill="#ee0000"/>
<rect x="1363" y="774" width="5" height="23" fill="#ee0000"/>
<rect x="1371" y="763" width="5" height="36" fill="#00ee00"/>
<rect x="1379" y="766" width="5" height="2" fill="#ee0000"/>
<rect x="1387" y="764" width="5" height="14" fill="#ee0000"/>
<rect x="1395" y="744" width="5" height="32" fill="#00ee00"/>
<rect x="1403" y="736" width="5" height="6" fill="#00ee00"/>
<rect x="1411" y="736" width="5" height="31" fill="#ee0000"/>
<rect x="1419" y="767" width="5" height="12" fill="#ee0000"/>
<rect x="1427" y="784" width="5" height="7" fill="#ee0000"/>
<rect x="1435" y="790" width="5" height="6" fill="#ee0000"/>
<rect x="1443" y="797" width="5" height="11" fill="#ee0000"/>
<rect x="1451" y="774" width="5" height="38" fill="#00ee00"/>
<rect x="1459" y="735" width="5" height="47" fill="#00ee00"/>
<rect x="1467" y="737" width="5" height="7" fill="#ee0000"/>
<rect x="1475" y="739" width="5" height="6" fill="#00ee00"/>
<rect x="1483" y="736" width="5" height="5" fill="#00ee00"/>
<rect x="1491" y="714" width="5" height="26" fill="#00ee00"/>
<rect x="1499" y="696" width="5" height="19" fill="#00ee00"/>
<rect x="1507" y="676" width="5" height="20" fill="#00ee00"/>
<path d="M13.5 250V330M21.5 249V287M29.5 220V260M37.5 165V252M45.5 118V190M101.5 207V252M109.5 152V213M149.5 260V310M165.5 268V332M181.5 283V316M229.5 375V443M237.5 352V400M261.5 333V395M277.5 377V434M285.5 347V398M301.5 322V363M309.5 307V325M317.5 267V323M325.5 261V307M333.5 272V303M341.5 234V287M357.5 241V282M365.5 242V272M381.5 261V282M389.5 254V270M413.5 294V322M437.5 303V330M461.5 304V342M509.5 366V400M517.5 358V388M525.5 341V377M533.5 325V368M541.5 321V340M549.5 282V342M573.5 304V335M597.5 340V366M613.5 314V342M621.5 294V326M645.5 284V322M717.5 387V423M725.5 366V402M749.5 338V397M773.5 349V367M797.5 365V416M805.5 359V388M853.5 423V465M869.5 437V481M877.5 418V456M885.5 407V447M893.5 363V418M957.5 477V527M981.5 499V553M1005.5 522V571M1077.5 603V673M1117.5 645V687M1125.5 639V687M1133.5 634V656M1141.5 643V667M1149.5 607V652M1213.5 754V792M1221.5 752V765M1237.5 765V790M1261.5 769V832M1285.5 756V777M1301.5 790V814M1317.5 810V832M1325.5 789V818M1333.5 768V811M1349.5 752V778M1373.5 760V809M1397.5 736V777M1405.5 724V747M1453.5 770V812M1461.5 728V783M1477.5 722V746M1485.5 725V744M1493.5 708V741M1501.5 695V716M1509.5 667V706" stroke="#00dd00" stroke-width="1" fill="none"/>
<path d="M53.5 122V158M61.5 133V200M69.5 140V175M77.5 133V180M85.5 175V213M93.5 186V248M117.5 142V200M125.5 145V213M133.5 165V210M141.5 203V282M157.5 260V337M173.5 274V319M189.5 289V334M197.5 293V389M205.5 377V407M213.5 362V403M221.5 382V432M245.5 351V392M253.5 373V407M269.5 349V422M293.5 357V398M349.5 242V281M373.5 233V279M397.5 256V272M405.5 273V311M421.5 293V317M429.5 305V333M445.5 308V339M453.5 325V345M469.5 280V327M477.5 310V339M485.5 317V344M493.5 331V377M501.5 359V393M557.5 285V312M565.5 303V332M581.5 322V347M589.5 342V358M605.5 335V351M629.5 272V311M637.5 292V319M653.5 285V311M661.5 308V334M669.5 309V337M677.5 311V343M685.5 337V367M693.5 354V386M701.5 362V408M709.5 401V432M733.5 359V383M741.5 371V399M757.5 330V358M765.5 346V363M781.5 353V387M789.5 381V410M813.5 363V411M821.5 370V403M829.5 372V402M837.5 383V421M845.5 393V448M861.5 433V482M901.5 372V408M909.5 391V421M917.5 412V447M925.5 435V473M933.5 446V474M941.5 462V502M949.5 487V507M965.5 493V522M973.5 500V531M989.5 492V535M997.5 507V547M1013.5 516V559M1021.5 549V589M1029.5 567V603M1037.5 570V614M1045.5 592V646M1053.5 627V687M1061.5 621V673M1069.5 631V672M1085.5 603V637M1093.5 587V632M1101.5 609V658M1109.5 637V687M1157.5 605V645M1165.5 624V671M1173.5 650V686M1181.5 662V696M1189.5 686V707M1197.5 688V741M1205.5 722V772M1229.5 752V776M1245.5 765V833M1253.5 797V844M1269.5 742V779M1277.5 760V791M1293.5 762V813M1309.5 799V833M1341.5 762V780M1357.5 751V782M1365.5 760V802M1381.5 757V769M1389.5 763V787M1413.5 727V772M1421.5 766V788M1429.5 770V797M1437.5 772V806M1445.5 790V814M1469.5 721V749" stroke="#e00000" stroke-width="1" fill="none"/>
<polyline points="13.0,300.2 21.0,296.1 29.0,289.5 37.0,279.1 45.0,264.8 53.0,254.6 61.0,245.5 69.0,237.7 77.0,232.2 85.0,228.5 93.0,230.2 101.0,228.8 109.0,223.9 117.0,220.0 125.0,217.9 133.0,217.0 141.0,222.7 149.0,226.6 157.0,236.2 165.0,239.3 173.0,245.9 181.0,249.8 189.0,257.1 197.0,268.4 205.0,279.7 213.0,290.8 221.0,303.6 229.0,313.9 237.0,317.7 245.0,323.8 253.0,330.0 261.0,332.0 269.0,338.6 277.0,343.0 285.0,344.7 293.0,346.5 301.0,345.0 309.0,342.1 317.0,337.1 325.0,332.1 333.0,327.1 341.0,319.6 349.0,315.3 357.0,311.0 365.0,306.0 373.0,302.9 381.0,299.9 389.0,297.0 397.0,294.7 405.0,294.7 413.0,294.7 421.0,296.3 429.0,298.4 437.0,299.9 445.0,302.3 453.0,305.7 461.0,305.9 469.0,307.0 477.0,308.9 485.0,311.7 493.0,317.5 501.0,323.4 509.0,328.6 517.0,331.8 525.0,333.7 533.0,334.1 541.0,334.4 549.0,330.3 557.0,328.2 565.0,328.0 573.0,327.6 581.0,328.9 589.0,331.0 597.0,332.0 605.0,332.5 613.0,332.1 621.0,329.2 629.0,327.2 637.0,326.2 645.0,323.1 653.0,321.9 661.0,322.9 669.0,323.4 677.0,325.1 685.0,327.9 693.0,332.6 701.0,339.4 709.0,346.4 717.0,351.2 725.0,352.9 733.0,355.5 741.0,359.4 749.0,358.4 757.0,358.3 765.0,358.5 773.0,358.5 781.0,360.8 789.0,365.1 797.0,365.9 805.0,366.6 813.0,368.0 821.0,369.3 829.0,371.4 837.0,375.5 845.0,381.9 853.0,387.0 861.0,395.3 869.0,399.9 877.0,402.9 885.0,404.2 893.0,402.6 901.0,403.0 909.0,404.1 917.0,407.9 925.0,413.0 933.0,418.2 941.0,424.5 949.0,430.9 957.0,436.9 965.0,442.8 973.0,450.7 981.0,455.7 989.0,460.1 997.0,467.1 1005.0,473.9 1013.0,481.5 1021.0,489.4 1029.0,499.6 1037.0,509.7 1045.0,521.2 1053.0,533.5 1061.0,542.8 1069.0,553.6 1077.0,558.7 1085.0,564.2 1093.0,570.3 1101.0,577.8 1109.0,587.6 1117.0,595.8 1125.0,601.4 1133.0,605.8 1141.0,610.0 1149.0,609.9 1157.0,613.0 1165.0,616.4 1173.0,622.5 1181.0,628.5 1189.0,634.0 1197.0,643.2 1205.0,654.7 1213.0,664.1 1221.0,672.7 1229.0,682.0 1237.0,689.9 1245.0,701.1 1253.0,712.8 1261.0,718.1 1269.0,723.5 1277.0,728.5 1285.0,732.2 1293.0,739.5 1301.0,744.7 1309.0,752.2 1317.0,757.6 1325.0,762.1 1333.0,763.5 1341.0,764.5 1349.0,764.6 1357.0,765.3 1365.0,768.2 1373.0,767.7 1381.0,767.8 1389.0,768.7 1397.0,766.4 1405.0,763.7 1413.0,764.0 1421.0,765.3 1429.0,767.7 1437.0,770.3 1445.0,773.7 1453.0,773.7 1461.0,770.2 1469.0,767.8 1477.0,765.2 1485.0,762.5 1493.0,758.1 1501.0,752.5 1509.0,745.5" fill="none" stroke="#1c7c74" stroke-width="2.6" stroke-linejoin="round" shape-rendering="crispEdges"/>
<polyline points="13.0,282.0 21.0,275.2 29.0,262.4 37.0,240.6 45.0,210.9 53.0,196.2 61.0,185.9 69.0,179.4 77.0,178.8 85.0,181.9 93.0,198.1 101.0,202.4 109.0,195.5 117.0,191.9 125.0,193.2 133.0,196.9 141.0,217.7 149.0,229.5 157.0,255.4 165.0,259.0 173.0,272.3 181.0,276.5 189.0,289.8 197.0,312.6 205.0,332.7 213.0,350.0 221.0,370.3 229.0,382.0 237.0,375.5 245.0,377.9 253.0,381.4 261.0,374.0 269.0,381.5 277.0,382.9 285.0,377.7 293.0,374.5 301.0,363.4 309.0,350.8 317.0,334.8 325.0,321.6 333.0,310.5 341.0,294.1 349.0,288.6 357.0,283.4 365.0,276.6 373.0,275.4 381.0,274.1 389.0,272.6 397.0,272.2 405.0,277.9 413.0,282.2 421.0,289.6 429.0,297.2 437.0,301.7 445.0,307.7 453.0,315.8 461.0,313.6 469.0,314.7 477.0,318.0 485.0,323.5 493.0,336.4 501.0,348.0 509.0,356.3 517.0,358.0 525.0,356.7 533.0,352.0 541.0,348.3 549.0,333.7 557.0,327.0 565.0,326.8 573.0,326.1 581.0,329.8 589.0,335.4 597.0,337.0 605.0,337.3 613.0,334.9 621.0,326.2 629.0,321.4 637.0,320.1 645.0,313.3 653.0,312.5 661.0,317.6 669.0,320.2 677.0,325.7 685.0,333.2 693.0,344.9 701.0,360.4 709.0,374.3 717.0,380.5 725.0,377.9 733.0,378.9 741.0,383.7 749.0,375.0 757.0,370.5 765.0,368.1 773.0,365.6 781.0,370.2 789.0,379.6 797.0,378.2 805.0,376.9 813.0,378.2 821.0,379.4 829.0,382.5 837.0,391.2 845.0,404.9 853.0,413.2 861.0,429.4 869.0,433.5 877.0,433.4 885.0,429.3 893.0,418.7 901.0,415.8 909.0,415.6 917.0,423.2 925.0,433.4 933.0,442.5 941.0,453.7 949.0,464.0 957.0,472.2 965.0,479.7 973.0,492.3 981.0,495.4 989.0,497.8 997.0,507.6 1005.0,516.0 1013.0,526.5 1021.0,536.9 1029.0,553.1 1037.0,567.6 1045.0,584.7 1053.0,602.5 1061.0,610.9 1069.0,623.7 1077.0,620.3 1085.0,619.9 1093.0,622.7 1101.0,630.3 1109.0,644.2 1117.0,652.4 1125.0,653.8 1133.0,652.9 1141.0,652.6 1149.0,641.5 1157.0,642.1 1165.0,644.3 1173.0,654.0 1181.0,662.7 1189.0,669.3 1197.0,685.7 1205.0,706.8 1213.0,719.6 1221.0,729.5 1229.0,740.8 1237.0,747.6 1245.0,764.2 1253.0,780.4 1261.0,778.1 1269.0,778.0 1277.0,778.0 1285.0,776.0 1293.0,785.0 1301.0,788.0 1309.0,797.8 1317.0,801.3 1325.0,802.7 1333.0,796.3 1341.0,791.0 1349.0,784.5 1357.0,781.6 1365.0,785.5 1373.0,779.8 1381.0,776.9 1389.0,777.2 1397.0,768.9 1405.0,760.7 1413.0,762.2 1421.0,766.4 1429.0,772.6 1437.0,778.4 1445.0,785.8 1453.0,782.9 1461.0,770.9 1469.0,764.2 1477.0,757.9 1485.0,752.4 1493.0,742.8 1501.0,731.1 1509.0,717.3" fill="none" stroke="#e80000" stroke-width="2" stroke-linejoin="round" shape-rendering="crispEdges"/>
<polyline points="13.0,280.0 21.0,267.5 29.0,245.8 37.0,210.4 45.0,166.2 53.0,159.1 61.0,157.0 69.0,158.5 77.0,167.8 85.0,179.4 93.0,213.2 101.0,214.1 109.0,194.5 117.0,187.8 125.0,192.4 133.0,200.2 141.0,240.1 149.0,252.5 157.0,292.8 165.0,281.4 173.0,296.7 181.0,292.8 189.0,311.4 197.0,346.2 205.0,369.6 213.0,385.8 221.0,408.4 229.0,412.7 237.0,384.4 245.0,384.7 253.0,388.3 261.0,370.2 269.0,387.1 277.0,387.0 285.0,374.5 293.0,369.8 301.0,349.9 309.0,331.4 317.0,309.2 325.0,295.6 333.0,286.3 341.0,265.7 349.0,268.8 357.0,268.4 365.0,262.2 373.0,267.1 381.0,268.6 389.0,268.3 397.0,269.6 405.0,282.3 413.0,288.7 421.0,300.3 429.0,310.2 437.0,312.6 445.0,319.3 453.0,329.6 461.0,318.3 469.0,318.2 477.0,323.1 485.0,331.5 493.0,353.3 501.0,368.1 509.0,374.6 517.0,368.8 525.0,360.9 533.0,349.4 541.0,343.2 549.0,316.6 557.0,311.8 565.0,318.9 573.0,321.5 581.0,331.2 589.0,341.6 597.0,341.8 605.0,339.9 613.0,334.0 621.0,317.0 629.0,312.0 637.0,314.0 645.0,303.5 653.0,306.7 661.0,319.9 669.0,323.9 677.0,333.0 685.0,344.5 693.0,362.2 701.0,384.6 709.0,400.3 717.0,399.7 725.0,384.8 733.0,383.4 741.0,390.7 749.0,369.9 757.0,363.4 765.0,362.2 773.0,360.1 781.0,372.1 789.0,390.0 797.0,382.0 805.0,377.5 813.0,379.8 821.0,381.4 829.0,386.7 837.0,401.8 845.0,423.9 853.0,431.0 861.0,454.5 869.0,450.2 877.0,441.6 885.0,429.3 893.0,408.2 901.0,407.6 909.0,411.3 917.0,428.6 925.0,446.3 933.0,458.2 941.0,472.6 949.0,483.8 957.0,490.4 965.0,496.2 973.0,513.1 981.0,509.0 989.0,507.0 997.0,522.0 1005.0,531.5 1013.0,544.8 1021.0,556.4 1029.0,579.2 1037.0,595.1 1045.0,615.5 1053.0,635.8 1061.0,635.9 1069.0,648.9 1077.0,629.5 1085.0,624.2 1093.0,627.6 1101.0,640.3 1109.0,663.2 1117.0,670.1 1125.0,664.0 1133.0,657.0 1141.0,654.5 1149.0,631.3 1157.0,637.6 1165.0,644.3 1173.0,663.7 1181.0,676.3 1189.0,682.7 1197.0,708.8 1205.0,739.4 1213.0,748.7 1221.0,753.9 1229.0,764.4 1237.0,766.2 1245.0,790.1 1253.0,809.6 1261.0,790.3 1269.0,784.1 1277.0,781.1 1285.0,775.5 1293.0,793.8 1301.0,795.4 1309.0,811.2 1317.0,811.6 1325.0,809.3 1333.0,793.1 1341.0,784.1 1349.0,774.5 1357.0,773.8 1365.0,785.4 1373.0,774.2 1381.0,771.1 1389.0,774.5 1397.0,759.3 1405.0,747.6 1413.0,757.3 1421.0,768.2 1429.0,779.6 1437.0,787.8 1445.0,797.9 1453.0,785.9 1461.0,760.5 1469.0,752.2 1477.0,745.6 1485.0,740.8 1493.0,727.4 1501.0,711.7 1509.0,693.9" fill="none" stroke="#0000e0" stroke-width="2" stroke-linejoin="round" shape-rendering="crispEdges"/>
<path d="M1190 752L1525 712M1257 844L1845 750" stroke="#6a3418" stroke-width="1" fill="none" shape-rendering="crispEdges"/>
<path d="M1477 659H1510" stroke="#8a1010" stroke-width="2"/>
<path d="M1477 665.5H1510M1477 671.5H1510" stroke="#a02020" stroke-width="1" stroke-dasharray="18 6"/>
<path d="M1477 678H1510" stroke="#d06828" stroke-width="2"/>
<path d="M1477 683.5H1510M1477 690.5H1510" stroke="#207020" stroke-width="1" stroke-dasharray="18 6"/>
<path d="M1477 695H1510" stroke="#105010" stroke-width="2"/>
<text x="1498.5" y="697" font-size="17" fill="#e02828" style="font-family:'Liberation Mono',monospace;white-space:pre">^- 1440:5</text>
<text x="1261" y="455.5" font-size="21" fill="#ea18ea" text-anchor="start" >Triangle move target = 1.16</text>
<text x="1551" y="593.5" font-size="21" fill="#ea18ea" text-anchor="start" >560 pip move above 1.105 = 1.16</text>
<text x="1817" y="635" font-size="21" fill="#ea18ea" text-anchor="start" >1.14</text>
<text x="1817" y="711" font-size="21" fill="#ea18ea" text-anchor="start" >1.12</text>
<text x="1820" y="746" font-size="21" fill="#ea18ea" text-anchor="start" >1.105</text>
<text x="940" y="818.5" font-size="21" fill="#ea18ea" text-anchor="start" >Triangle height = 560 pips</text>
</g>
<path d="M397.5 83V861M397.5 865V987" stroke="#000" stroke-width="1" stroke-dasharray="3 3"/>
<path d="M821.5 83V861M821.5 865V987" stroke="#000" stroke-width="1" stroke-dasharray="3 3"/>
<path d="M1237.5 83V861M1237.5 865V987" stroke="#000" stroke-width="1" stroke-dasharray="3 3"/>
<path d="M1653.5 83V861M1653.5 865V987" stroke="#000" stroke-width="1" stroke-dasharray="3 3"/>
<path d="M16.800 88.800h6.600l-3.300 4.200z" fill="#000"/>
<text x="28" y="94" font-size="9.5" fill="#000" text-anchor="start" >AUDNZD,Weekly  1.11626 1.12958 1.11203 1.12526</text>
<text x="18" y="853.5" font-size="10.3" fill="#989898" text-anchor="start" textLength="143.5" lengthAdjust="spacingAndGlyphs">Weekly Pivots | © CompassFX</text>
<path d="M13 861.5H1880M13 864.5H1880M13 987.5H1880" stroke="#000" stroke-width="1"/>
<path d="M1879.5 83V988" stroke="#000" stroke-width="1"/>
<path d="M1880 99.5h2" stroke="#000"/>
<text x="1885" y="102.5" font-size="9.3" fill="#000" text-anchor="start" >1.38810</text>
<path d="M1880 132.5h2" stroke="#000"/>
<text x="1885" y="135.5" font-size="9.3" fill="#000" text-anchor="start" >1.37325</text>
<path d="M1880 165.5h2" stroke="#000"/>
<text x="1885" y="168.5" font-size="9.3" fill="#000" text-anchor="start" >1.35795</text>
<path d="M1880 198.5h2" stroke="#000"/>
<text x="1885" y="201.5" font-size="9.3" fill="#000" text-anchor="start" >1.34310</text>
<path d="M1880 231.5h2" stroke="#000"/>
<text x="1885" y="234.5" font-size="9.3" fill="#000" text-anchor="start" >1.32780</text>
<path d="M1880 264.5h2" stroke="#000"/>
<text x="1885" y="267.5" font-size="9.3" fill="#000" text-anchor="start" >1.31295</text>
<path d="M1880 297.5h2" stroke="#000"/>
<text x="1885" y="300.5" font-size="9.3" fill="#000" text-anchor="start" >1.29810</text>
<path d="M1880 330.5h2" stroke="#000"/>
<text x="1885" y="333.5" font-size="9.3" fill="#000" text-anchor="start" >1.28280</text>
<path d="M1880 363.5h2" stroke="#000"/>
<text x="1885" y="366.5" font-size="9.3" fill="#000" text-anchor="start" >1.26795</text>
<path d="M1880 396.5h2" stroke="#000"/>
<text x="1885" y="399.5" font-size="9.3" fill="#000" text-anchor="start" >1.25265</text>
<path d="M1880 430.5h2" stroke="#000"/>
<text x="1885" y="433.5" font-size="9.3" fill="#000" text-anchor="start" >1.23780</text>
<path d="M1880 463.5h2" stroke="#000"/>
<text x="1885" y="466.5" font-size="9.3" fill="#000" text-anchor="start" >1.22250</text>
<path d="M1880 496.5h2" stroke="#000"/>
<text x="1885" y="499.5" font-size="9.3" fill="#000" text-anchor="start" >1.20765</text>
<path d="M1880 529.5h2" stroke="#000"/>
<text x="1885" y="532.5" font-size="9.3" fill="#000" text-anchor="start" >1.19235</text>
<path d="M1880 562.5h2" stroke="#000"/>
<text x="1885" y="565.5" font-size="9.3" fill="#000" text-anchor="start" >1.17750</text>
<path d="M1880 595.5h2" stroke="#000"/>
<text x="1885" y="598.5" font-size="9.3" fill="#000" text-anchor="start" >1.16220</text>
<path d="M1880 628.5h2" stroke="#000"/>
<text x="1885" y="631.5" font-size="9.3" fill="#000" text-anchor="start" >1.14735</text>
<path d="M1880 661.5h2" stroke="#000"/>
<text x="1885" y="664.5" font-size="9.3" fill="#000" text-anchor="start" >1.13205</text>
<path d="M1880 694.5h2" stroke="#000"/>
<text x="1885" y="697.5" font-size="9.3" fill="#000" text-anchor="start" >1.11720</text>
<path d="M1880 727.5h2" stroke="#000"/>
<text x="1885" y="730.5" font-size="9.3" fill="#000" text-anchor="start" >1.10190</text>
<path d="M1880 760.5h2" stroke="#000"/>
<text x="1885" y="763.5" font-size="9.3" fill="#000" text-anchor="start" >1.08705</text>
<path d="M1880 793.5h2" stroke="#000"/>
<text x="1885" y="796.5" font-size="9.3" fill="#000" text-anchor="start" >1.07175</text>
<path d="M1880 826.5h2" stroke="#000"/>
<text x="1885" y="829.5" font-size="9.3" fill="#000" text-anchor="start" >1.05690</text>
<path d="M1880 859.5h2" stroke="#000"/>
<text x="1885" y="862.5" font-size="9.3" fill="#000" text-anchor="start" >1.04205</text>
<rect x="1881" y="482" width="39" height="11" fill="#30e030"/>
<text x="1885.5" y="491" font-size="9.3" fill="#fff" text-anchor="start" >1.21096</text>
<rect x="1881" y="532" width="39" height="11" fill="#0000c8"/>
<text x="1885.5" y="541" font-size="9.3" fill="#fff" text-anchor="start" >1.18819</text>
<rect x="1881" y="594" width="39" height="11" fill="#b22828"/>
<text x="1885.5" y="603" font-size="9.3" fill="#fff" text-anchor="start" >1.16000</text>
<rect x="1881" y="638" width="39" height="11" fill="#b22828"/>
<text x="1885.5" y="647" font-size="9.3" fill="#fff" text-anchor="start" >1.14000</text>
<rect x="1881" y="681" width="39" height="11" fill="#b22828"/>
<text x="1885.5" y="690" font-size="9.3" fill="#fff" text-anchor="start" >1.12000</text>
<rect x="1881" y="670" width="39" height="11" fill="#000"/>
<text x="1885.5" y="679" font-size="9.3" fill="#fff" text-anchor="start" >1.12526</text>
<rect x="1881" y="686" width="39" height="11" fill="#0000c8"/>
<text x="1885.5" y="695" font-size="9.3" fill="#fff" text-anchor="start" >1.11818</text>
<rect x="1881" y="715" width="39" height="11" fill="#30e030"/>
<text x="1885.5" y="724" font-size="9.3" fill="#fff" text-anchor="start" >1.10512</text>
<rect x="1881" y="728" width="39" height="11" fill="#30e030"/>
<text x="1885.5" y="737" font-size="9.3" fill="#fff" text-anchor="start" >1.09858</text>
<rect x="1881" y="780" width="39" height="11" fill="#b22828"/>
<text x="1885.5" y="789" font-size="9.3" fill="#fff" text-anchor="start" >1.07500</text>
<g clip-path="url(#ca)">
<path d="M13 955.5H1879" stroke="#a01c1c" stroke-width="1"/>
<polyline points="12.5,957.5 21.2,961.2 30.0,946.2 45.0,929.5 53.8,933.8 70.0,948.8 85.0,957.5 101.2,965.0 112.5,955.0 117.5,954.5 132.5,961.2 160.0,972.5 185.0,977.5 203.8,981.2 213.8,974.5 228.8,978.0 237.5,971.2 252.5,975.0 261.2,962.5 276.2,968.8 285.0,956.2 293.8,962.0 300.0,950.0 310.0,941.2 317.5,932.5 333.8,943.8 341.2,934.5 357.5,948.0 367.5,952.0 382.5,957.0 388.8,955.0 397.5,957.5 422.5,969.5 437.5,971.2 453.8,975.0 465.0,960.0 471.2,955.0 480.0,961.2 497.5,970.0 508.8,972.5 517.5,966.2 542.5,957.5 548.8,947.5 555.0,949.5 565.0,957.5 580.0,963.8 592.5,969.5 605.0,971.2 616.2,951.2 628.8,942.5 636.2,948.0 652.5,951.2 662.5,960.0 680.0,967.5 695.0,972.5 708.8,977.0 716.2,972.0 726.2,960.0 735.0,958.8 741.2,962.5 750.0,952.5 758.8,950.0 775.0,960.0 790.0,967.0 797.5,962.5 805.0,961.2 822.5,968.0 842.5,972.5 868.8,979.2 880.0,967.5 887.5,963.8 893.8,951.2 900.0,955.0 910.0,961.2 930.0,968.8 950.0,975.5 960.0,977.0 981.2,981.2 990.0,977.5 1005.0,980.0 1013.8,978.0 1037.5,981.2 1053.8,983.8 1068.8,983.0 1077.5,974.5 1085.0,976.2 1093.8,969.5 1117.5,976.8 1132.5,973.0 1141.2,975.0 1150.0,957.5 1158.8,963.0 1180.0,971.2 1212.5,978.2 1221.2,975.0 1237.5,978.0 1253.8,981.2 1270.0,959.5 1277.5,963.0 1285.0,962.0 1317.5,973.8 1328.8,956.2 1335.0,953.0 1341.2,953.2 1348.8,948.8 1365.0,958.8 1387.5,967.0 1396.2,955.0 1405.0,950.0 1422.5,960.0 1440.0,967.5 1445.0,969.5 1452.5,962.5 1461.2,948.0 1467.5,947.5 1477.5,951.2 1486.2,955.0 1492.5,951.2 1502.5,935.0 1508.8,930.0" fill="none" stroke="#30a030" stroke-width="1" shape-rendering="crispEdges"/>
<polyline points="12.5,958.0 37.5,968.8 52.5,974.5 61.2,967.5 70.0,970.5 77.5,967.5 85.0,951.2 93.8,946.2 102.5,950.0 117.5,960.0 132.5,955.0 141.2,945.0 150.0,939.5 156.2,939.5 162.5,942.5 181.2,955.5 190.0,951.2 205.0,936.2 213.8,943.0 221.2,937.0 230.0,940.5 246.2,952.0 252.5,946.2 261.2,952.5 270.0,948.0 275.0,948.8 285.0,953.8 317.5,968.8 342.5,976.2 372.5,981.2 382.5,978.8 388.8,980.0 397.5,977.5 405.0,960.0 412.5,956.2 422.5,960.0 428.8,950.5 437.5,955.0 451.2,951.2 460.0,955.0 470.0,961.2 480.0,955.0 485.0,955.0 492.5,943.8 501.2,939.5 510.0,940.5 520.0,948.8 532.5,956.2 542.5,961.2 557.5,968.8 565.0,957.5 573.8,958.0 581.2,950.0 590.0,946.2 600.0,946.8 607.5,952.5 616.2,957.0 628.8,964.5 637.5,961.2 645.0,963.8 653.8,968.8 662.5,953.8 670.0,957.0 677.5,957.0 685.0,943.8 692.5,936.2 701.2,933.2 710.0,923.0 720.0,933.0 732.5,946.2 741.2,941.2 752.5,950.0 762.5,947.5 773.8,947.0 782.5,938.8 790.0,929.5 805.0,943.8 815.0,940.0 830.0,951.2 840.0,943.8 852.5,937.5 861.2,936.2 877.5,949.5 890.0,957.5 902.5,963.8 910.0,955.0 925.0,934.5 932.5,939.5 942.5,931.2 950.0,933.0 960.0,934.5 966.2,940.5 975.0,938.8 981.2,936.2 990.0,943.8 997.5,942.0 1005.0,938.0 1013.8,943.8 1021.2,933.0 1028.8,932.0 1037.5,934.5 1053.8,921.2 1061.2,930.0 1092.5,955.0 1110.0,940.8 1120.0,948.0 1133.8,956.2 1141.2,954.5 1150.0,958.8 1158.8,963.0 1167.5,952.5 1173.8,948.0 1181.2,945.5 1188.8,942.0 1203.8,927.5 1213.8,923.0 1221.2,932.0 1246.2,919.5 1253.8,923.8 1270.0,938.8 1277.5,939.5 1285.0,946.2 1293.8,936.2 1301.2,943.0 1308.8,937.0 1325.0,949.5 1335.0,956.2 1351.2,963.0 1357.5,962.0 1365.0,957.5 1373.8,956.2 1382.5,960.5 1390.0,955.0 1405.0,963.0 1422.5,943.8 1440.0,942.5 1446.2,941.2 1455.0,948.8 1462.5,954.5 1477.5,961.2 1492.5,968.0 1508.8,973.0" fill="none" stroke="#d01020" stroke-width="1" shape-rendering="crispEdges"/>
<polyline points="12.5,951.2 25.0,955.0 37.5,948.8 53.8,934.5 70.0,932.5 75.0,933.0 85.0,938.8 100.0,941.2 112.5,948.8 132.5,960.0 150.0,948.8 185.0,927.5 206.2,910.0 215.0,907.5 228.8,902.0 246.2,906.2 252.5,905.0 262.5,912.5 276.2,918.0 290.0,930.0 302.5,936.2 310.0,934.5 332.5,924.5 342.5,917.5 372.5,902.5 390.0,899.0 397.5,900.5 405.0,908.8 422.5,922.0 437.5,923.8 452.5,921.2 460.0,925.0 480.0,941.2 486.2,942.5 500.0,937.0 510.0,932.5 517.5,933.0 525.0,936.2 533.8,943.8 542.5,948.8 555.0,946.2 565.0,952.5 573.8,957.0 587.5,952.5 597.5,947.5 605.0,945.5 615.0,950.5 630.0,949.5 640.0,950.0 652.5,949.5 665.0,955.0 677.5,956.2 687.5,948.8 700.0,937.5 715.0,925.8 720.0,925.8 732.5,932.5 742.5,934.5 762.5,947.0 773.8,949.5 782.5,947.0 790.0,942.5 805.0,941.2 816.2,940.0 830.0,939.5 850.0,928.8 868.8,913.8 875.0,914.5 892.5,927.5 910.0,939.5 917.5,938.8 930.0,932.5 942.5,925.0 960.0,913.8 972.5,906.2 981.2,899.5 990.0,898.0 1005.0,891.2 1013.8,890.0 1030.0,883.8 1053.8,872.0 1062.5,870.0 1068.8,867.0 1077.5,872.0 1085.0,875.5 1092.5,883.8 1101.2,888.0 1117.5,890.5 1125.0,893.8 1135.0,899.5 1141.2,900.5 1150.0,911.2 1157.5,920.5 1165.0,925.0 1173.8,926.2 1182.5,925.0 1192.5,920.5 1202.5,913.8 1212.5,906.2 1237.5,893.8 1253.8,885.5 1260.0,886.2 1270.0,894.5 1285.0,905.8 1295.0,908.2 1305.0,910.0 1317.5,908.8 1335.0,926.2 1342.5,931.2 1351.2,935.0 1367.5,945.0 1382.5,952.0 1390.0,952.5 1413.8,959.5 1422.5,957.5 1440.0,951.2 1447.5,947.5 1455.0,948.8 1462.5,953.0 1477.5,954.5 1485.0,956.2 1492.5,953.8 1508.8,940.5" fill="none" stroke="#000" stroke-width="1" shape-rendering="crispEdges"/>
</g>
<text x="17" y="877" font-size="9.5" fill="#000" text-anchor="start" >ADX(14) 29.5421 +DI:34.9517 -DI:8.9946</text>
<path d="M1880 871.5h2" stroke="#000"/>
<text x="1885" y="874.5" font-size="9.3" fill="#000" text-anchor="start" >73</text>
<path d="M1880 904.5h2" stroke="#000"/>
<text x="1885" y="907.5" font-size="9.3" fill="#000" text-anchor="start" >55</text>
<path d="M1880 934.5h2" stroke="#000"/>
<text x="1885" y="937.5" font-size="9.3" fill="#000" text-anchor="start" >37</text>
<path d="M1880 963.5h2" stroke="#000"/>
<text x="1885" y="966.5" font-size="9.3" fill="#000" text-anchor="start" >19</text>
<path d="M1880 980.5h2" stroke="#000"/>
<text x="1885" y="983.5" font-size="9.3" fill="#000" text-anchor="start" >1</text>
<rect x="1881" y="950" width="39" height="11" fill="#b02020"/>
<text x="1884" y="959" font-size="9.3" fill="#fff" text-anchor="start" >20.0000</text>
<path d="M13.5 988v3" stroke="#000"/>
<text x="12.5" y="1000" font-size="9.4" fill="#000" text-anchor="start" >30 Jan 2011</text>
<path d="M77.5 988v3" stroke="#000"/>
<text x="76.5" y="1000" font-size="9.4" fill="#000" text-anchor="start" >27 Mar 2011</text>
<path d="M141.5 988v3" stroke="#000"/>
<text x="140.5" y="1000" font-size="9.4" fill="#000" text-anchor="start" >22 May 2011</text>
<path d="M205.5 988v3" stroke="#000"/>
<text x="204.5" y="1000" font-size="9.4" fill="#000" text-anchor="start" >17 Jul 2011</text>
<path d="M269.5 988v3" stroke="#000"/>
<text x="268.5" y="1000" font-size="9.4" fill="#000" text-anchor="start" >11 Sep 2011</text>
<path d="M333.5 988v3" stroke="#000"/>
<text x="332.5" y="1000" font-size="9.4" fill="#000" text-anchor="start" >6 Nov 2011</text>
<path d="M397.5 988v3" stroke="#000"/>
<text x="396.5" y="1000" font-size="9.4" fill="#000" text-anchor="start" >1 Jan 2012</text>
<path d="M461.5 988v3" stroke="#000"/>
<text x="460.5" y="1000" font-size="9.4" fill="#000" text-anchor="start" >26 Feb 2012</text>
<path d="M525.5 988v3" stroke="#000"/>
<text x="524.5" y="1000" font-size="9.4" fill="#000" text-anchor="start" >22 Apr 2012</text>
<path d="M589.5 988v3" stroke="#000"/>
<text x="588.5" y="1000" font-size="9.4" fill="#000" text-anchor="start" >17 Jun 2012</text>
<path d="M653.5 988v3" stroke="#000"/>
<text x="652.5" y="1000" font-size="9.4" fill="#000" text-anchor="start" >12 Aug 2012</text>
<path d="M717.5 988v3" stroke="#000"/>
<text x="716.5" y="1000" font-size="9.4" fill="#000" text-anchor="start" >7 Oct 2012</text>
<path d="M781.5 988v3" stroke="#000"/>
<text x="780.5" y="1000" font-size="9.4" fill="#000" text-anchor="start" >2 Dec 2012</text>
<path d="M845.5 988v3" stroke="#000"/>
<text x="844.5" y="1000" font-size="9.4" fill="#000" text-anchor="start" >27 Jan 2013</text>
<path d="M909.5 988v3" stroke="#000"/>
<text x="908.5" y="1000" font-size="9.4" fill="#000" text-anchor="start" >24 Mar 2013</text>
<path d="M973.5 988v3" stroke="#000"/>
<text x="972.5" y="1000" font-size="9.4" fill="#000" text-anchor="start" >19 May 2013</text>
<path d="M1037.5 988v3" stroke="#000"/>
<text x="1036.5" y="1000" font-size="9.4" fill="#000" text-anchor="start" >14 Jul 2013</text>
<path d="M1101.5 988v3" stroke="#000"/>
<text x="1100.5" y="1000" font-size="9.4" fill="#000" text-anchor="start" >8 Sep 2013</text>
<path d="M1165.5 988v3" stroke="#000"/>
<text x="1164.5" y="1000" font-size="9.4" fill="#000" text-anchor="start" >3 Nov 2013</text>
<path d="M1229.5 988v3" stroke="#000"/>
<text x="1228.5" y="1000" font-size="9.4" fill="#000" text-anchor="start" >29 Dec 2013</text>
<path d="M1293.5 988v3" stroke="#000"/>
<text x="1292.5" y="1000" font-size="9.4" fill="#000" text-anchor="start" >23 Feb 2014</text>
<path d="M1357.5 988v3" stroke="#000"/>
<text x="1356.5" y="1000" font-size="9.4" fill="#000" text-anchor="start" >20 Apr 2014</text>
<path d="M1421.5 988v3" stroke="#000"/>
<text x="1420.5" y="1000" font-size="9.4" fill="#000" text-anchor="start" >15 Jun 2014</text>
<path d="M1485.5 988v3" stroke="#000"/>
<text x="1484.5" y="1000" font-size="9.4" fill="#000" text-anchor="start" >10 Aug 2014</text>
</svg>
<div id="tabs">
<i style="left:84px"></i>
<i style="left:164px"></i>
<i style="left:244px"></i>
<i style="left:320px"></i>
<i style="left:396px"></i>
<i style="left:476px"></i>
<i style="left:556px"></i>
<i style="left:648px"></i>
<i style="left:723px"></i>
<i style="left:801px"></i>
<i style="left:880px"></i>
<i style="left:960px"></i>
<i style="left:1036px"></i>
<i style="left:1128px"></i>
<i style="left:1203px"></i>
<i style="left:1291px"></i>
<i style="left:1367px"></i>
<i style="left:1443px"></i>
<i style="left:1525px"></i>
<i style="left:1628px"></i>
<i style="left:1708px"></i>
<span style="left:14px">EURUSD,H4</span>
<span style="left:94px">EURUSD,H4</span>
<span style="left:174px">EURUSD,H4</span>
<span style="left:254px">EURJPY,H4</span>
<span style="left:330px">EURJPY,H4</span>
<span style="left:407px">AUDUSD,H4</span>
<span style="left:487px">AUDUSD,H4</span>
<span style="left:568px">AUDUSD,Daily</span>
<span style="left:658px">AUDJPY,H4</span>
<span style="left:734px">AUDJPY,H4</span>
<span style="left:812px">GBPUSD,H4</span>
<span style="left:892px">GBPUSD,H4</span>
<span style="left:970px">NZDUSD,H4</span>
<span style="left:1049px">NZDUSD,Daily</span>
<span style="left:1138px">USDJPY,H4</span>
<span style="left:1215px">USDJPY,Daily</span>
<span style="left:1302px">GBPJPY,H4</span>
<span style="left:1378px">GBPJPY,H4</span>
<span style="left:1454px">EURAUD,H4</span>
<span style="left:1535px">EURAUD,Weekly</span>
<span style="left:1639px">AUDNZD,H4</span>
<div class="abs" style="left:1708px;top:-1px;width:104px;height:19px;background:#fff;border:1px solid #000;border-top:1px solid #fff"></div>
<span style="left:1720px;color:#000">AUDNZD,Weekly</span>
<span style="left:1823px">GBPAUD,H4</span>
</div>
<div id="status"><span style="left:2px">For Help, press F1</span><span style="left:1196px">Default</span><span style="left:1312px">2011.02.13 00:00</span><span style="left:1414px">O: 1.31990</span><span style="left:1485px">H: 1.33410</span><span style="left:1556px">L: 1.31960</span><span style="left:1625px">C: 1.33190</span><span style="left:1695px">V: 207081</span><span style="left:1820px">339/3 kb</span>
<i style="left:1191px"></i>
<i style="left:1305px"></i>
<i style="left:1408px"></i>
<i style="left:1479px"></i>
<i style="left:1550px"></i>
<i style="left:1618px"></i>
<i style="left:1688px"></i>
<i style="left:1754px"></i>
</div>
<div id="tb1"></div><div id="tb2"></div><div id="tb3"></div>
<svg class="abs" style="left:0;top:0" width="1920" height="82" viewBox="0 0 1920 82"><rect x="10" y="7" width="16" height="17" rx="1.5" fill="#2a2a2e"/><text x="12" y="19" font-size="9" fill="#8a9a90" font-family="Liberation Sans, sans-serif">Gh</text><rect x="1835" y="12.5" width="10" height="2.5" fill="#1a1a1a"/><rect x="1862.8" y="8" width="9.5" height="6.5" fill="none" stroke="#1a1a1a" stroke-width="1.4"/><rect x="1862" y="7" width="11" height="2.4" fill="#1a1a1a"/><rect x="1880" y="0" width="40" height="21" fill="#cf4a43"/><path d="M1899 7l8 8M1907 7l-8 8" stroke="#fff" stroke-width="2"/><rect x="14.5" y="35.5" width="8" height="7" fill="#e8f0fa" stroke="#5a82b4"/><rect x="18.5" y="39.5" width="8" height="7" fill="#e8f0fa" stroke="#5a82b4"/><path d="M20 44l1.5-2l1.5 2l1.5-2" stroke="#4a72a4" fill="none" stroke-width=".8"/><rect x="1867.5" y="32.5" width="17" height="17" fill="#dde8f6" stroke="#9ab0cc"/><rect x="1886.5" y="32.5" width="17" height="17" fill="#dde8f6" stroke="#9ab0cc"/><rect x="1905.5" y="32.5" width="17" height="17" fill="#dde8f6" stroke="#9ab0cc"/><rect x="1872" y="42.5" width="7" height="2" fill="#3c4a5e"/><path d="M1891.5 40.5h6v5h-6zM1893.5 40v-2.5h6v5h-2" fill="none" stroke="#3c4a5e" stroke-width="1.4"/><path d="M1910 37.5l7 7M1917 37.5l-7 7" stroke="#3c4a5e" stroke-width="1.8"/><path d="M10 56.5h3M10 58.5h3M10 60.5h3M10 62.5h3M10 64.5h3M10 66.5h3M10 68.5h3M10 70.5h3M10 72.5h3M10 74.5h3" stroke="#a8a8a8" stroke-width="1"/><rect x="19.5" y="58.5" width="13" height="11" fill="#f4f8fc" stroke="#44607c"/><path d="M22.5 61v6M21 62.5l1.5-1.5l1.5 1.5" stroke="#a04080" stroke-width=".8" fill="none"/><path d="M28.6 62.0h3.8v3.6h3.6v3.8h-3.6v3.6h-3.8v-3.6h-3.6v-3.8h3.6z" fill="#2cd02c" stroke="#108010" stroke-width="1"/><path d="M41 65.5h6l-3 3.5z" fill="#000"/><rect x="59.5" y="62.5" width="13" height="10" fill="#e4eef8" stroke="#5a7ea4"/><rect x="55.5" y="58.5" width="13" height="10" fill="#f0f6fc" stroke="#44607c"/><path d="M58 64.5h9" stroke="#7090b0" stroke-width=".8"/><path d="M78 65.5h6l-3 3.5z" fill="#000"/><path d="M91.5 53V78" stroke="#b4b4b4" stroke-width="1"/><path d="M92.5 53V78" stroke="#fff" stroke-width="1"/><rect x="100.5" y="58.5" width="15" height="14" fill="#e6f0fa" stroke="#4a7ab0"/><path d="M102.5 64.5l3.5-4l3.5 4h-2v3h-3v-3z" fill="#30c030" stroke="#187818" stroke-width=".7"/><path d="M107.5 67l3.5 4l3.5-4h-2v-3h-3v3z" fill="#f05040" stroke="#a02818" stroke-width=".7"/><circle cx="136" cy="66" r="5.5" fill="none" stroke="#555" stroke-width="1.5"/><path d="M136 58v5M136 69v5M128 66h5M139 66h5" stroke="#555" stroke-width="1.3"/><path d="M155.5 60.5h4l1 1.5h5v7h-10z" fill="#f4d060" stroke="#c09820"/><path d="M167.5 63l1.700 3.4l3.700.5l-2.700 2.6l.7 3.700l-3.4-1.8l-3.3 1.8l.6-3.700l-2.700-2.6l3.700-.5z" fill="#f8e040" stroke="#b09010" stroke-width=".8"/><rect x="184.5" y="59.5" width="15" height="13" fill="#fbfdff" stroke="#4a78b0"/><rect x="185" y="60" width="3" height="12" fill="#4a80c8"/><path d="M190 62.5h8M190 65.5h8M190 68.5h8" stroke="#a0b4cc" stroke-width=".8"/><rect x="212.5" y="58.5" width="11" height="11" fill="#e2ecf6" stroke="#7a9cc0"/><circle cx="220" cy="66" r="4" fill="#eef4fa" stroke="#5a7a9c" stroke-width="1.2"/><path d="M223 69l5.5 5.5" stroke="#d0a030" stroke-width="2.2"/><path d="M237.5 53V78" stroke="#b4b4b4" stroke-width="1"/><path d="M238.5 53V78" stroke="#fff" stroke-width="1"/><path d="M247.5 58.5h7l3 3v10h-10z" fill="#fff" stroke="#667"/><path d="M249.5 63h5M249.5 65.5h5" stroke="#889" stroke-width=".8"/><path d="M256.1 65.5h3.8v3.6h3.6v3.8h-3.6v3.6h-3.8v-3.6h-3.6v-3.8h3.6z" fill="#2cd02c" stroke="#108010" stroke-width="1"/><path d="M341 59l8.5 6.5l-7 7.5l-8.5-6.5z" fill="#e8b828" stroke="#9a7010"/><path d="M334.5 67.5l8 6l7-7" fill="none" stroke="#c89818" stroke-width="1.5"/><path d="M362 66c0-3 3-5 7.5-5s8 2 8 5l-3 8h-9z" fill="#f0c840" stroke="#b08818" stroke-width=".8"/><path d="M361.5 64c0-3 3.5-5.5 8-5.5s8 2.5 8 5.5c-3 2-13 2-16 0z" fill="#6cb0e8" stroke="#3a78b8" stroke-width=".8"/><circle cx="373.5" cy="70" r="4.2" fill="#e03820"/><rect x="371.8" y="68.3" width="3.4" height="3.4" fill="#fff"/><path d="M457.5 53V78" stroke="#b4b4b4" stroke-width="1"/><path d="M458.5 53V78" stroke="#fff" stroke-width="1"/><path d="M460 56.5h3M460 58.5h3M460 60.5h3M460 62.5h3M460 64.5h3M460 66.5h3M460 68.5h3M460 70.5h3M460 72.5h3M460 74.5h3" stroke="#a8a8a8" stroke-width="1"/><path d="M474.5 60V74.5M472 71.5H485.5M473 62.5l1.5-2l1.5 2M484 70l1.5 1.5l-1.5 1.5" stroke="#444" stroke-width="1.1" fill="none"/><path d="M479.5 61v8M479.5 63h2.5M477 67h2.5" stroke="#2a9a2a" stroke-width="1.3" fill="none"/><rect x="494.5" y="54.5" width="25" height="23" fill="#f9f9f9" stroke="#fff" stroke-width="1"/><path d="M494.5 77.5V54.5H519.5" fill="none" stroke="#a0a0a0"/><path d="M502.5 60V74.5M500 71.5H513.5M501 62.5l1.5-2l1.5 2M512 70l1.5 1.5l-1.5 1.5" stroke="#444" stroke-width="1.1" fill="none"/><path d="M509.5 59v12" stroke="#1a7a1a" stroke-width="1.2"/><rect x="507.5" y="61.5" width="4" height="7" fill="#30c030" stroke="#1a7a1a"/><path d="M530.5 60V74.5M528 71.5H541.5M529 62.5l1.5-2l1.5 2M540 70l1.5 1.5l-1.5 1.5" stroke="#444" stroke-width="1.1" fill="none"/><path d="M531 70q4-10 7-7t4 5" stroke="#4a8a4a" stroke-width="1.2" fill="none"/><path d="M551.5 53V78" stroke="#b4b4b4" stroke-width="1"/><path d="M552.5 53V78" stroke="#fff" stroke-width="1"/><path d="M568.5 67.5l6 6" stroke="#c8a838" stroke-width="2.4"/><circle cx="565" cy="64" r="5" fill="#e8f2fc" stroke="#3a7ed0" stroke-width="1.6"/><path d="M562.5 64h5" stroke="#2a6ec0" stroke-width="1.6"/><path d="M565 61.5v5" stroke="#2a6ec0" stroke-width="1.6"/><path d="M596.5 67.5l6 6" stroke="#c8a838" stroke-width="2.4"/><circle cx="593" cy="64" r="5" fill="#e8f2fc" stroke="#3a7ed0" stroke-width="1.6"/><path d="M590.5 64h5" stroke="#2a6ec0" stroke-width="1.6"/><rect x="616" y="58" width="7.5" height="7" fill="#48a848"/><rect x="624.5" y="58" width="7.5" height="7" fill="#3868c0"/><rect x="616" y="66" width="7.5" height="7" fill="#3868c0"/><rect x="624.5" y="66" width="7.5" height="7" fill="#48a848"/><path d="M617.5 62.5h4.5M626 62.5h4.5M617.5 70.5h4.5M626 70.5h4.5" stroke="#e8f0e8" stroke-width="1.6"/><path d="M641.5 53V78" stroke="#b4b4b4" stroke-width="1"/><path d="M642.5 53V78" stroke="#fff" stroke-width="1"/><rect x="646.5" y="54.5" width="26" height="23" fill="#f9f9f9" stroke="#fff" stroke-width="1"/><path d="M646.5 77.5V54.5H672.5" fill="none" stroke="#a0a0a0"/><path d="M654.5 60V74.5M652 71.5H665.5M653 62.5l1.5-2l1.5 2M664 70l1.5 1.5l-1.5 1.5" stroke="#444" stroke-width="1.1" fill="none"/><path d="M659.5 62v7l4.5-3.5z" fill="#30b030" stroke="#1a801a" stroke-width=".6"/><rect x="675.5" y="54.5" width="25" height="23" fill="#f9f9f9" stroke="#fff" stroke-width="1"/><path d="M675.5 77.5V54.5H700.5" fill="none" stroke="#a0a0a0"/><path d="M683.5 60V74.5M681 71.5H694.5M682 62.5l1.5-2l1.5 2M693 70l1.5 1.5l-1.5 1.5" stroke="#444" stroke-width="1.1" fill="none"/><path d="M688.5 60v11M694 65.5h-5M691.5 63.5l-2.5 2l2.5 2" stroke="#b03020" stroke-width="1.1" fill="none"/><path d="M703.5 53V78" stroke="#b4b4b4" stroke-width="1"/><path d="M704.5 53V78" stroke="#fff" stroke-width="1"/><path d="M713.5 59.5h6l3 3v8h-9z" fill="#fff" stroke="#667"/><path d="M716 62.5v6M715 63.5h2" stroke="#556" stroke-width=".8"/><path d="M722.1 64.0h3.8v3.6h3.6v3.8h-3.6v3.6h-3.8v-3.6h-3.6v-3.8h3.6z" fill="#2cd02c" stroke="#108010" stroke-width="1"/><path d="M733 65.5h6l-3 3.5z" fill="#000"/><circle cx="757" cy="66" r="7.5" fill="#fff" stroke="#2060c8" stroke-width="2.6"/><path d="M757 61.5v4.5h3.5" stroke="#d06020" stroke-width="1.2" fill="none"/><path d="M770 65.5h6l-3 3.5z" fill="#000"/><rect x="786.5" y="59.5" width="15" height="13" fill="#eef4fa" stroke="#4a78a8"/><rect x="787" y="60" width="14" height="2.5" fill="#88a8d0"/><path d="M788.5 66l3-1.5l3 1l3-1.5l2.5 1" stroke="#d06020" stroke-width=".9" fill="none"/><path d="M788.5 70l3-1l3 1.5l3-2l2.5 1" stroke="#2a9a2a" stroke-width=".9" fill="none"/><path d="M807 65.5h6l-3 3.5z" fill="#000"/><path d="M818.5 53V78" stroke="#b4b4b4" stroke-width="1"/><path d="M819.5 53V78" stroke="#fff" stroke-width="1"/><path d="M821 56.5h3M821 58.5h3M821 60.5h3M821 62.5h3M821 64.5h3M821 66.5h3M821 68.5h3M821 70.5h3M821 72.5h3M821 74.5h3" stroke="#a8a8a8" stroke-width="1"/><rect x="828.5" y="54.5" width="25" height="23" fill="#f9f9f9" stroke="#fff" stroke-width="1"/><path d="M828.5 77.5V54.5H853.5" fill="none" stroke="#a0a0a0"/><path d="M836 58.5v13l3-3l2.5 5l2-1l-2.5-5h4.5z" fill="#444" stroke="#333" stroke-width=".6"/><path d="M868.5 59v15M861 66.5h15" stroke="#444" stroke-width="1"/><path d="M886.5 53V78" stroke="#b4b4b4" stroke-width="1"/><path d="M887.5 53V78" stroke="#fff" stroke-width="1"/><path d="M904.5 60v14" stroke="#555" stroke-width="1.2"/><path d="M926 66.5h14" stroke="#555" stroke-width="1.2"/><path d="M955 73l12-12" stroke="#666" stroke-width="1.4"/><path d="M981 70l12-9M982 73l12-9M984 61l-1 11M988 60l-1 11M992 59l-1 8" stroke="#555" stroke-width="1" fill="none"/><text x="992.5" y="76" font-size="6.5" font-weight="bold" fill="#333" font-family="Liberation Sans, sans-serif">E</text><path d="M1010 59.5h14M1010 62.5h14M1010 66.5h14M1010 70.5h9" stroke="#555" stroke-width="1" stroke-dasharray="1 1"/><text x="1020" y="76" font-size="6.5" font-weight="bold" fill="#333" font-family="Liberation Sans, sans-serif">F</text><text x="1040" y="71.5" font-size="12.5" fill="#555" font-family="Liberation Sans, sans-serif">A</text><rect x="1067.5" y="59.5" width="11" height="13" fill="none" stroke="#666" stroke-dasharray="1 1"/><path d="M1069.5 62.5h7M1073 62.5v8" stroke="#555" stroke-width="1.4"/><rect x="1094.5" y="62.5" width="12" height="9" rx="1.5" fill="#868686" stroke="#5a5a5a"/><ellipse cx="1129" cy="66.5" rx="7.5" ry="4.8" fill="#868686" stroke="#5a5a5a"/><path d="M1154 59.5l2.5 2.5l-2.5 2.5l-2.5-2.5zM1160.5 67.5l2.5 2.5l-2.5 2.5l-2.5-2.5z" fill="#444"/><path d="M1153 67l2 2.5l4.5-5" stroke="#444" stroke-width="1.4" fill="none"/><path d="M1169 65.5h6l-3 3.5z" fill="#000"/><path d="M1180.5 53V78" stroke="#b4b4b4" stroke-width="1"/><path d="M1181.5 53V78" stroke="#fff" stroke-width="1"/><path d="M1184 56.5h3M1184 58.5h3M1184 60.5h3M1184 62.5h3M1184 64.5h3M1184 66.5h3M1184 68.5h3M1184 70.5h3M1184 72.5h3M1184 74.5h3" stroke="#a8a8a8" stroke-width="1"/><rect x="1386.5" y="54.5" width="25" height="23" fill="#f9f9f9" stroke="#fff" stroke-width="1"/><path d="M1386.5 77.5V54.5H1411.5" fill="none" stroke="#a0a0a0"/><text x="1195" y="69.7" font-size="9" fill="#333" font-family="Liberation Sans, sans-serif">M1</text><text x="1223" y="69.7" font-size="9" fill="#333" font-family="Liberation Sans, sans-serif">M5</text><text x="1249" y="69.7" font-size="9" fill="#333" font-family="Liberation Sans, sans-serif">M15</text><text x="1277" y="69.7" font-size="9" fill="#333" font-family="Liberation Sans, sans-serif">M30</text><text x="1308" y="69.7" font-size="9" fill="#333" font-family="Liberation Sans, sans-serif">H1</text><text x="1335" y="69.7" font-size="9" fill="#333" font-family="Liberation Sans, sans-serif">H4</text><text x="1364" y="69.7" font-size="9" fill="#333" font-family="Liberation Sans, sans-serif">D1</text><text x="1392" y="69.7" font-size="9" fill="#333" font-family="Liberation Sans, sans-serif">W1</text><text x="1418" y="69.7" font-size="9" fill="#333" font-family="Liberation Sans, sans-serif">MN</text><path d="M1441.5 53V78" stroke="#a0a0a0"/><rect x="1720.5" y="53.5" width="171" height="23" fill="#fff" stroke="#b4b4b4"/><path d="M1880 65.5l-4.5 5" stroke="#2a5a9c" stroke-width="2"/><circle cx="1883.5" cy="62.5" r="4" fill="#f4f8fc" stroke="#3a6ab0" stroke-width="1.3"/><path d="M1899 58h16v11h-10l-3 3.5v-3.5h-3z" fill="#4068b0"/><text x="1904" y="67" font-size="9" font-weight="bold" fill="#fff" font-family="Liberation Sans, sans-serif">5</text></svg>
<svg class="abs" style="left:0;top:1008px" width="1920" height="40" viewBox="0 1008 1920 40"><path d="M1898 1013.5v7l-3.5-3.5z" fill="#9a9a9a"/><path d="M1911 1013.5v7l3.5-3.5z" fill="#000"/><path d="M9.5 1010v15" stroke="#888"/><path d="M1768.0 1033v12" stroke="#30a030" stroke-width="1.2" stroke-dasharray="1 1" opacity=".8"/><path d="M1770.2 1033v12" stroke="#30a030" stroke-width="1.2" stroke-dasharray="1 1" opacity=".8"/><path d="M1772.4 1033v12" stroke="#30a030" stroke-width="1.2" stroke-dasharray="1 1" opacity=".8"/><path d="M1774.6 1033v12" stroke="#30a030" stroke-width="1.2" stroke-dasharray="1 1" opacity=".8"/><path d="M1776.8 1033v12" stroke="#30a030" stroke-width="1.2" stroke-dasharray="1 1" opacity=".8"/><path d="M1779.0 1033v12" stroke="#c03030" stroke-width="1.2" stroke-dasharray="1 1" opacity=".8"/><path d="M1781.2 1033v12" stroke="#c03030" stroke-width="1.2" stroke-dasharray="1 1" opacity=".8"/><path d="M1783.4 1033v12" stroke="#c03030" stroke-width="1.2" stroke-dasharray="1 1" opacity=".8"/><path d="M1785.6 1033v12" stroke="#c03030" stroke-width="1.2" stroke-dasharray="1 1" opacity=".8"/><path d="M1787.8 1033v12" stroke="#c03030" stroke-width="1.2" stroke-dasharray="1 1" opacity=".8"/></svg>
<svg class="abs" style="left:0;top:1040px" width="1920" height="40" viewBox="0 1040 1920 40"><rect x="176.5" y="1041.5" width="58" height="38" fill="rgba(255,255,255,0.16)" stroke="rgba(255,255,255,0.3)"/><rect x="362.5" y="1041.5" width="58" height="38" fill="rgba(255,255,255,0.32)" stroke="rgba(255,255,255,0.75)"/><rect x="424.5" y="1041.5" width="58" height="38" fill="rgba(255,255,255,0.16)" stroke="rgba(255,255,255,0.3)"/><rect x="486.5" y="1041.5" width="58" height="38" fill="rgba(255,255,255,0.16)" stroke="rgba(255,255,255,0.3)"/><path d="M11 1050.5l11.5-1.600v10.300h-11.5zM24 1048.700l15-2.100v12.600h-15zM11 1060.700h11.5v10.300l-11.5-1.600zM24 1060.700h15v12.600l-15-2.100z" fill="#fff"/><circle cx="81" cy="1060" r="11" fill="none" stroke="#2aa0e8" stroke-width="5.5"/><rect x="70" y="1057.5" width="22" height="4.5" fill="#2aa0e8"/><path d="M84 1062h10v10h-10z" fill="#4d2d3e"/><path d="M66 1070q4-24 32-22" stroke="#f0c030" stroke-width="2.200" fill="none"/><path d="M127 1046h12l2 2.5h16v7h-30z" fill="#f0c850"/><rect x="127" y="1052" width="30" height="20" fill="#f8dc78" stroke="#d8a830" stroke-width=".8"/><path d="M133 1072v-9h18v9" fill="#6ab0e8" stroke="#3a80c0"/><rect x="137" y="1060" width="10" height="3.5" fill="#4a90d0"/><circle cx="205" cy="1060" r="14.5" fill="#e0392b"/><path d="M205 1060L192.400 1052.700A14.5 14.5 0 0 0 205 1074.5z" fill="#2ea043" transform="rotate(-60 205 1060)"/><path d="M205 1060l12.600 7.300A14.5 14.5 0 0 1 197.700 1072.5z" fill="#2ea043"/><path d="M205 1060L217.600 1067.300A14.5 14.5 0 0 0 219.5 1060L219 1054z" fill="#f7c81e"/><path d="M205 1060h14.5a14.5 14.5 0 0 1-7.250 12.560z" fill="#f7c81e"/><path d="M205 1060l-7.250 12.560a14.5 14.5 0 0 1-5.350-19.860z" fill="#2ea043"/><circle cx="205" cy="1060" r="6.800" fill="#fff"/><circle cx="205" cy="1060" r="5.300" fill="#3a82e8"/><rect x="254.5" y="1045.5" width="25" height="30" rx="2" fill="#e8f0f8" stroke="#4a80c0" stroke-width="1.5"/><rect x="258" y="1049" width="18" height="7" fill="#78b8e8"/><path d="M258 1060h18M258 1064.5h18M258 1069h18" stroke="#5a90c8" stroke-width="2.5" stroke-dasharray="3 2"/><rect x="271" y="1058" width="5" height="13" fill="#f0a030"/><g transform="translate(326.5 1060) scale(.85) translate(-327 -1059.5)"><path d="M310 1050l34-5v24l-34 5z" fill="#a8a8a8"/><path d="M310 1056l34-5M310 1062l34-5M310 1068l34-5M321 1048.5v6M333 1046.5v6M315 1055.5v6M327 1053.5v6M339 1051.5v6M321 1060.5v6M333 1058.5v6M315 1067.5v6M327 1065.5v6M339 1063.5v6" stroke="#5a5a5a" stroke-width="1.200"/></g><rect x="376" y="1044" width="31" height="33" fill="#202428"/><text x="377" y="1064" font-size="15" fill="#c8d0c8" font-family="Liberation Sans, sans-serif">G</text><circle cx="397" cy="1058.5" r="5.5" fill="none" stroke="#30b060" stroke-width="1.600"/><circle cx="453.5" cy="1061" r="13.5" fill="#f4f4f4" stroke="#d82020" stroke-width="3.5"/><path d="M443.5 1068l5-9l4 5l5-11l4 7" stroke="#d82020" stroke-width="2.800" fill="none"/><rect x="510" y="1046" width="18" height="28" fill="#fff" stroke="#2a5aa8"/><path d="M516 1052h10M516 1056h10M516 1060h10M516 1064h10M516 1068h10" stroke="#2a5aa8" stroke-width="1.400"/><path d="M500 1048l15-2.5v29l-15-2.5z" fill="#2a5aa8"/><text x="502.5" y="1065" font-size="11" font-weight="bold" fill="#fff" font-family="Liberation Sans, sans-serif">W</text><rect x="1643.5" y="1052.5" width="27" height="17" rx="2" fill="none" stroke="#fff" stroke-width="1.5"/><path d="M1647 1057h20M1647 1060.5h20" stroke="#fff" stroke-width="2" stroke-dasharray="2 1.300"/><path d="M1650 1065.5h14" stroke="#fff" stroke-width="1.800"/><path d="M1686 1064l4-4l4 4z" fill="#fff"/><rect x="1706.5" y="1056.5" width="14" height="11" fill="none" stroke="#fff" stroke-width="1.600"/><path d="M1706 1062h15M1713.5 1062v6" stroke="#fff" stroke-width="1.600"/><rect x="1741" y="1054" width="7" height="14" fill="none" stroke="#fff" stroke-width="1.5"/><rect x="1743" y="1052" width="3" height="2" fill="#fff"/><path d="M1735 1053v5M1737.5 1053v5M1734 1058h5v3h-2.5v7" stroke="#fff" stroke-width="1.200" fill="none"/><path d="M1757 1067v-2M1760.5 1067v-4M1764 1067v-7M1767.5 1067v-10M1771 1067v-13" stroke="#fff" stroke-width="2.200"/><path d="M1782 1058h3l4-4v15l-4-4h-3z" fill="#fff"/><path d="M1792 1057.5q2.5 4 0 8" stroke="#fff" stroke-width="1.300" fill="none"/><text x="1809.5" y="1066" font-size="12.5" fill="#fff" textLength="22.5" lengthAdjust="spacingAndGlyphs" font-family="Liberation Sans, sans-serif">ENG</text><text x="1853.7" y="1057" font-size="12.5" fill="#fff" textLength="42.5" lengthAdjust="spacingAndGlyphs" font-family="Liberation Sans, sans-serif">2:13 PM</text><text x="1848.7" y="1074" font-size="12.5" fill="#fff" textLength="52.5" lengthAdjust="spacingAndGlyphs" font-family="Liberation Sans, sans-serif">6/09/2014</text></svg>
</body></html>
